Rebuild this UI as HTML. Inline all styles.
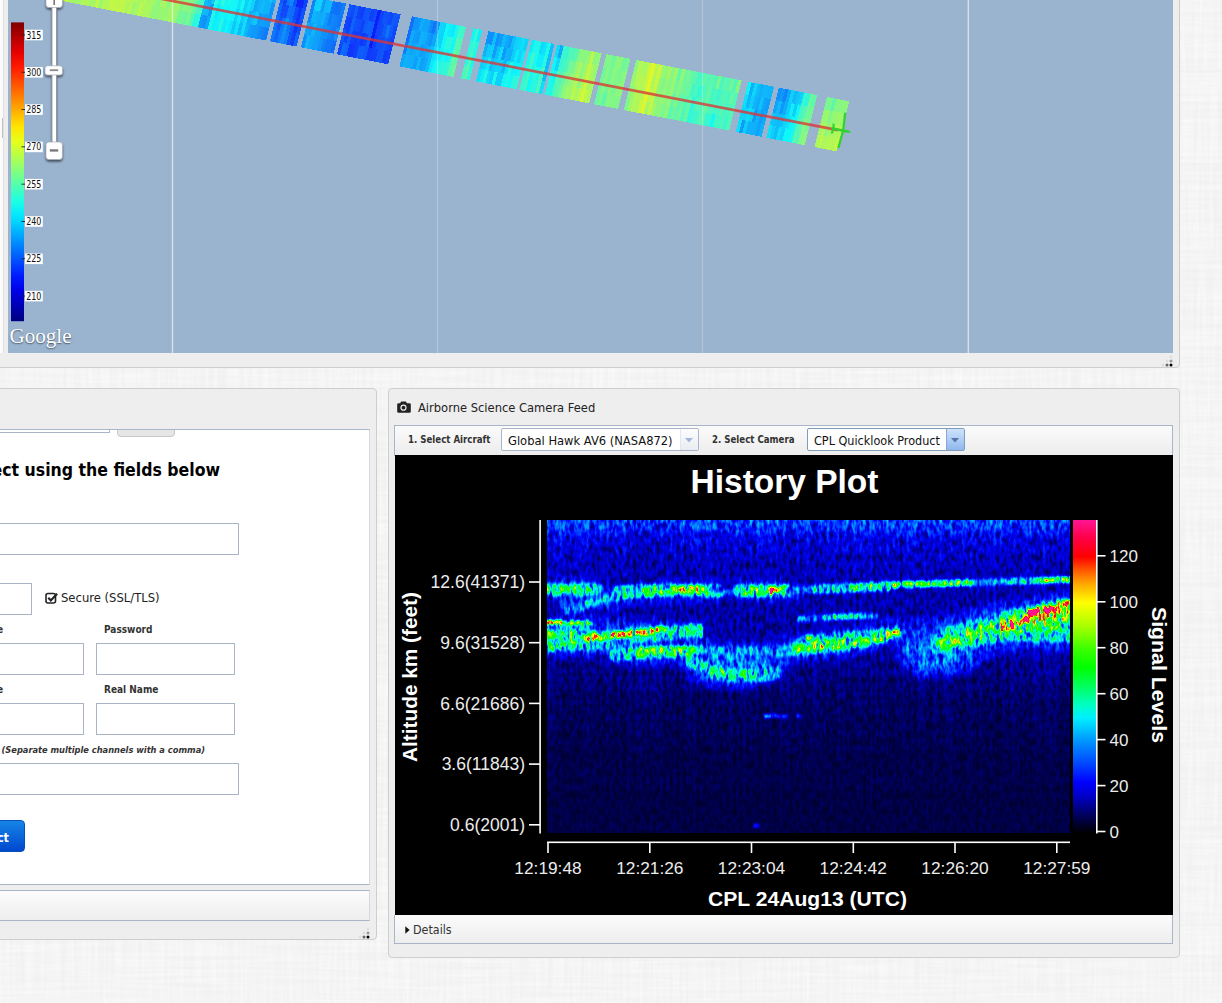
<!DOCTYPE html>
<html lang="en">
<head>
<meta charset="utf-8">
<title>Mission Tools Suite</title>
<style>
html,body{margin:0;padding:0;}
body{width:1222px;height:1003px;overflow:hidden;position:relative;background:#f1f1f1;font-family:"DejaVu Sans Condensed","DejaVu Sans","Liberation Sans",sans-serif;font-size:12.7px;color:#222;}
.abs{position:absolute;}
.bgtex{left:0;top:0;width:1222px;height:1003px;
 background-image:repeating-linear-gradient(0deg,rgba(0,0,0,0.008) 0 1px,transparent 1px 5px),repeating-linear-gradient(90deg,rgba(0,0,0,0.008) 0 1px,transparent 1px 5px);}
.panel{background:#eeeeee;border:1px solid #cecece;border-radius:4px;box-sizing:border-box;}
/* top map panel */
#mappanel{left:-20px;top:-20px;width:1200px;height:388px;}
#leftstrip{left:0;top:0;width:3px;height:353px;background:#fbfbfb;border-right:1px solid #e0e0e0;}
#map{left:8px;top:0;width:1165px;height:353px;background:#9ab3ce;overflow:hidden;}
.grip{width:12px;height:12px;}
/* left form panel */
#formpanel{left:-20px;top:388px;width:397px;height:552px;}
#formwhite{left:-5px;top:429px;width:375px;height:456px;background:#fff;border:1px solid #a9b5c9;border-right-color:#d3d9e3;box-sizing:border-box;overflow:hidden;}
.inp{background:#fff;border:1px solid #a9b4c6;box-sizing:border-box;}
.lbl{font-weight:bold;font-size:10px;color:#333;white-space:nowrap;}
#formbar{left:-5px;top:890px;width:375px;height:31px;border:1px solid #a9b5c9;border-right-color:#d3d9e3;box-sizing:border-box;background:linear-gradient(#fcfcfc,#eeeeee);}
/* right camera panel */
#campanel{left:388px;top:388px;width:792px;height:570px;}
#camtitle{left:418px;top:400px;font-size:12.8px;color:#222;white-space:nowrap;}
#toolbar{left:394px;top:425px;width:779px;height:31px;border:1px solid #a9b5c9;box-sizing:border-box;background:linear-gradient(#fbfbfb,#ececec);}
.tlbl{font-weight:bold;font-size:9.6px;color:#333;white-space:nowrap;}
.sel{box-sizing:border-box;height:23px;border:1px solid #a9b5c9;background:#fff;font-size:12.8px;color:#111;white-space:nowrap;border-radius:2px;}
#plot{left:395px;top:455px;width:778px;height:460px;background:#000;overflow:hidden;}
#details{left:394px;top:915px;width:779px;height:29px;border:1px solid #a9b5c9;border-top:none;box-sizing:border-box;background:linear-gradient(#fbfbfb,#eeeeee);}
</style>
</head>
<body>
<svg class="abs" style="left:0;top:0" width="1222" height="1003"><filter id="fab" filterUnits="userSpaceOnUse" x="0" y="0" width="1222" height="1003" color-interpolation-filters="sRGB"><feTurbulence type="fractalNoise" baseFrequency="0.012 0.3" numOctaves="2" seed="2" result="a"/><feTurbulence type="fractalNoise" baseFrequency="0.3 0.012" numOctaves="2" seed="5" result="b"/><feComposite in="a" in2="b" operator="arithmetic" k1="0" k2="0.500" k3="0.500" k4="0"/><feColorMatrix type="matrix" values="0 0 0 0 1  0 0 0 0 1  0 0 0 0 1  1.400 0 0 0 -0.450"/></filter><rect width="1222" height="1003" filter="url(#fab)"/></svg>

<!-- ============ TOP MAP PANEL ============ -->
<div class="abs panel" id="mappanel"></div>
<div class="abs" id="leftstrip"><div class="abs" style="left:2px;top:118px;width:1px;height:20px;background:#c4c4c4"></div></div>
<div class="abs" id="map">
<svg class="abs" style="left:0;top:0" width="1165" height="353" viewBox="8 0 1165 353">
<defs>
<linearGradient id="sw" gradientUnits="userSpaceOnUse" x1="-237.15" y1="0" x2="686.80" y2="0"><stop offset="0.0000" stop-color="#8c8c8c"/><stop offset="0.0750" stop-color="#8f8f8f"/><stop offset="0.1323" stop-color="#919191"/><stop offset="0.1874" stop-color="#999999"/><stop offset="0.2007" stop-color="#a1a1a1"/><stop offset="0.2150" stop-color="#949494"/><stop offset="0.2558" stop-color="#8f8f8f"/><stop offset="0.2778" stop-color="#808080"/><stop offset="0.2905" stop-color="#6b6b6b"/><stop offset="0.2922" stop-color="#454545"/><stop offset="0.2982" stop-color="#454545"/><stop offset="0.3004" stop-color="#5e5e5e"/><stop offset="0.3109" stop-color="#666666"/><stop offset="0.3252" stop-color="#595959"/><stop offset="0.3418" stop-color="#545454"/><stop offset="0.3517" stop-color="#4a4a4a"/><stop offset="0.3638" stop-color="#454545"/><stop offset="0.3705" stop-color="#383838"/><stop offset="0.3859" stop-color="#363636"/><stop offset="0.3947" stop-color="#2b2b2b"/><stop offset="0.3980" stop-color="#303030"/><stop offset="0.4046" stop-color="#454545"/><stop offset="0.4123" stop-color="#545454"/><stop offset="0.4168" stop-color="#474747"/><stop offset="0.4300" stop-color="#424242"/><stop offset="0.4388" stop-color="#3d3d3d"/><stop offset="0.4443" stop-color="#303030"/><stop offset="0.4686" stop-color="#2e2e2e"/><stop offset="0.4983" stop-color="#333333"/><stop offset="0.5127" stop-color="#404040"/><stop offset="0.5347" stop-color="#4a4a4a"/><stop offset="0.5491" stop-color="#5c5c5c"/><stop offset="0.5623" stop-color="#666666"/><stop offset="0.5711" stop-color="#707070"/><stop offset="0.5799" stop-color="#666666"/><stop offset="0.5888" stop-color="#696969"/><stop offset="0.5965" stop-color="#525252"/><stop offset="0.6174" stop-color="#545454"/><stop offset="0.6406" stop-color="#5c5c5c"/><stop offset="0.6439" stop-color="#666666"/><stop offset="0.6615" stop-color="#616161"/><stop offset="0.6692" stop-color="#545454"/><stop offset="0.6725" stop-color="#5c5c5c"/><stop offset="0.6836" stop-color="#6b6b6b"/><stop offset="0.6935" stop-color="#808080"/><stop offset="0.7034" stop-color="#919191"/><stop offset="0.7211" stop-color="#919191"/><stop offset="0.7266" stop-color="#808080"/><stop offset="0.7519" stop-color="#808080"/><stop offset="0.7596" stop-color="#858585"/><stop offset="0.7718" stop-color="#949494"/><stop offset="0.7806" stop-color="#a1a1a1"/><stop offset="0.7894" stop-color="#8f8f8f"/><stop offset="0.8049" stop-color="#808080"/><stop offset="0.8379" stop-color="#737373"/><stop offset="0.8809" stop-color="#707070"/><stop offset="0.8864" stop-color="#525252"/><stop offset="0.9041" stop-color="#4c4c4c"/><stop offset="0.9129" stop-color="#404040"/><stop offset="0.9184" stop-color="#454545"/><stop offset="0.9316" stop-color="#4f4f4f"/><stop offset="0.9427" stop-color="#666666"/><stop offset="0.9515" stop-color="#787878"/><stop offset="0.9614" stop-color="#878787"/><stop offset="0.9724" stop-color="#878787"/><stop offset="0.9868" stop-color="#8a8a8a"/><stop offset="1.0000" stop-color="#8c8c8c"/></linearGradient>
<linearGradient id="swv" x1="0" y1="0" x2="0" y2="1"><stop offset="0" stop-color="#000" stop-opacity="0.10"/><stop offset="0.5" stop-color="#000" stop-opacity="0"/><stop offset="1" stop-color="#fff" stop-opacity="0.08"/></linearGradient>
<filter id="jetf" filterUnits="userSpaceOnUse" x="0" y="0" width="900" height="170" color-interpolation-filters="sRGB">
<feTurbulence type="fractalNoise" baseFrequency="0.16 0.13" numOctaves="2" seed="3" result="t"/>
<feColorMatrix in="t" type="matrix" values="2 0 0 0 -0.5  2 0 0 0 -0.5  2 0 0 0 -0.5  0 0 0 0 1" result="n"/>
<feComposite in="SourceGraphic" in2="n" operator="arithmetic" k1="0.44" k2="0.78" k3="0" k4="0" result="m"/>
<feComponentTransfer in="m" result="c"><feFuncR type="table" tableValues="0.000 0.000 0.000 0.000 0.000 0.000 0.000 0.000 0.000 0.000 0.000 0.000 0.000 0.000 0.000 0.000 0.100 0.200 0.300 0.400 0.500 0.600 0.700 0.800 0.900 1.000 1.000 1.000 1.000 1.000 1.000 1.000 1.000 1.000 1.000 1.000 0.900 0.800 0.700 0.600 0.500"/><feFuncG type="table" tableValues="0.000 0.000 0.000 0.000 0.000 0.000 0.100 0.200 0.300 0.400 0.500 0.600 0.700 0.800 0.900 1.000 1.000 1.000 1.000 1.000 1.000 1.000 1.000 1.000 1.000 1.000 0.900 0.800 0.700 0.600 0.500 0.400 0.300 0.200 0.100 0.000 0.000 0.000 0.000 0.000 0.000"/><feFuncB type="table" tableValues="0.500 0.600 0.700 0.800 0.900 1.000 1.000 1.000 1.000 1.000 1.000 1.000 1.000 1.000 1.000 1.000 0.900 0.800 0.700 0.600 0.500 0.400 0.300 0.200 0.100 0.000 0.000 0.000 0.000 0.000 0.000 0.000 0.000 0.000 0.000 0.000 0.000 0.000 0.000 0.000 0.000"/></feComponentTransfer>
<feComposite in="c" in2="SourceGraphic" operator="in"/>
</filter>
<linearGradient id="jetbar" x1="0" y1="0" x2="0" y2="1"><stop offset="0.000" stop-color="rgb(128,0,0)"/><stop offset="0.050" stop-color="rgb(179,0,0)"/><stop offset="0.100" stop-color="rgb(229,0,0)"/><stop offset="0.150" stop-color="rgb(255,26,0)"/><stop offset="0.200" stop-color="rgb(255,76,0)"/><stop offset="0.250" stop-color="rgb(255,128,0)"/><stop offset="0.300" stop-color="rgb(255,179,0)"/><stop offset="0.350" stop-color="rgb(255,229,0)"/><stop offset="0.400" stop-color="rgb(229,255,26)"/><stop offset="0.450" stop-color="rgb(179,255,76)"/><stop offset="0.500" stop-color="rgb(128,255,128)"/><stop offset="0.550" stop-color="rgb(76,255,179)"/><stop offset="0.600" stop-color="rgb(26,255,229)"/><stop offset="0.650" stop-color="rgb(0,229,255)"/><stop offset="0.700" stop-color="rgb(0,179,255)"/><stop offset="0.750" stop-color="rgb(0,128,255)"/><stop offset="0.800" stop-color="rgb(0,76,255)"/><stop offset="0.850" stop-color="rgb(0,26,255)"/><stop offset="0.900" stop-color="rgb(0,0,229)"/><stop offset="0.950" stop-color="rgb(0,0,179)"/><stop offset="1.000" stop-color="rgb(0,0,128)"/></linearGradient>
<filter id="sh" x="-30%" y="-30%" width="160%" height="180%"><feGaussianBlur in="SourceAlpha" stdDeviation="1.2"/><feOffset dy="1.5"/><feComponentTransfer><feFuncA type="linear" slope="0.55"/></feComponentTransfer><feMerge><feMergeNode/><feMergeNode in="SourceGraphic"/></feMerge></filter>
</defs>
<g transform="translate(172.80 1.00) rotate(10.990) skewX(-3)" shape-rendering="crispEdges"><rect x="-186.2" y="-30.5" width="3.54" height="13.07" fill="#a4f766"/><rect x="-186.2" y="-17.7" width="3.54" height="13.07" fill="#a1f768"/><rect x="-186.2" y="-4.9" width="3.54" height="13.07" fill="#8ff77a"/><rect x="-186.2" y="8.0" width="3.54" height="13.07" fill="#82f788"/><rect x="-182.9" y="-30.5" width="3.54" height="13.07" fill="#b1f759"/><rect x="-182.9" y="-17.7" width="3.54" height="13.07" fill="#aef75b"/><rect x="-182.9" y="-4.9" width="3.54" height="13.07" fill="#96f774"/><rect x="-182.9" y="8.0" width="3.54" height="13.07" fill="#8ef77b"/><rect x="-179.6" y="-30.5" width="3.54" height="13.07" fill="#b9f751"/><rect x="-179.6" y="-17.7" width="3.54" height="13.07" fill="#baf750"/><rect x="-179.6" y="-4.9" width="3.54" height="13.07" fill="#aef75b"/><rect x="-179.6" y="8.0" width="3.54" height="13.07" fill="#9ff76a"/><rect x="-176.3" y="-30.5" width="3.54" height="13.07" fill="#bff74b"/><rect x="-176.3" y="-17.7" width="3.54" height="13.07" fill="#a2f767"/><rect x="-176.3" y="-4.9" width="3.54" height="13.07" fill="#98f772"/><rect x="-176.3" y="8.0" width="3.54" height="13.07" fill="#8ef77c"/><rect x="-173.1" y="-30.5" width="3.54" height="13.07" fill="#b1f759"/><rect x="-173.1" y="-17.7" width="3.54" height="13.07" fill="#a6f764"/><rect x="-173.1" y="-4.9" width="3.54" height="13.07" fill="#a1f769"/><rect x="-173.1" y="8.0" width="3.54" height="13.07" fill="#9cf76d"/><rect x="-169.8" y="-30.5" width="3.54" height="13.07" fill="#bef74b"/><rect x="-169.8" y="-17.7" width="3.54" height="13.07" fill="#b0f759"/><rect x="-169.8" y="-4.9" width="3.54" height="13.07" fill="#9bf76f"/><rect x="-169.8" y="8.0" width="3.54" height="13.07" fill="#a6f764"/><rect x="-166.5" y="-30.5" width="3.54" height="13.07" fill="#9ff76a"/><rect x="-166.5" y="-17.7" width="3.54" height="13.07" fill="#8ff77b"/><rect x="-166.5" y="-4.9" width="3.54" height="13.07" fill="#93f777"/><rect x="-166.5" y="8.0" width="3.54" height="13.07" fill="#86f784"/><rect x="-163.2" y="-30.5" width="3.54" height="13.07" fill="#caf73f"/><rect x="-163.2" y="-17.7" width="3.54" height="13.07" fill="#aaf75f"/><rect x="-163.2" y="-4.9" width="3.54" height="13.07" fill="#aaf760"/><rect x="-163.2" y="8.0" width="3.54" height="13.07" fill="#93f777"/><rect x="-159.9" y="-30.5" width="3.54" height="13.07" fill="#b2f758"/><rect x="-159.9" y="-17.7" width="3.54" height="13.07" fill="#a5f764"/><rect x="-159.9" y="-4.9" width="3.54" height="13.07" fill="#a2f768"/><rect x="-159.9" y="8.0" width="3.54" height="13.07" fill="#98f771"/><rect x="-156.6" y="-30.5" width="3.54" height="13.07" fill="#aaf75f"/><rect x="-156.6" y="-17.7" width="3.54" height="13.07" fill="#99f771"/><rect x="-156.6" y="-4.9" width="3.54" height="13.07" fill="#a6f764"/><rect x="-156.6" y="8.0" width="3.54" height="13.07" fill="#8df77d"/><rect x="-153.3" y="-30.5" width="3.54" height="13.07" fill="#b8f752"/><rect x="-153.3" y="-17.7" width="3.54" height="13.07" fill="#b8f752"/><rect x="-153.3" y="-4.9" width="3.54" height="13.07" fill="#a5f764"/><rect x="-153.3" y="8.0" width="3.54" height="13.07" fill="#aaf760"/><rect x="-150.0" y="-30.5" width="3.54" height="13.07" fill="#b9f750"/><rect x="-150.0" y="-17.7" width="3.54" height="13.07" fill="#adf75c"/><rect x="-150.0" y="-4.9" width="3.54" height="13.07" fill="#a3f767"/><rect x="-150.0" y="8.0" width="3.54" height="13.07" fill="#95f775"/><rect x="-146.7" y="-30.5" width="3.54" height="13.07" fill="#bdf74d"/><rect x="-146.7" y="-17.7" width="3.54" height="13.07" fill="#bef74b"/><rect x="-146.7" y="-4.9" width="3.54" height="13.07" fill="#a8f761"/><rect x="-146.7" y="8.0" width="3.54" height="13.07" fill="#a8f761"/><rect x="-143.4" y="-30.5" width="3.54" height="13.07" fill="#b9f750"/><rect x="-143.4" y="-17.7" width="3.54" height="13.07" fill="#b1f758"/><rect x="-143.4" y="-4.9" width="3.54" height="13.07" fill="#aaf75f"/><rect x="-143.4" y="8.0" width="3.54" height="13.07" fill="#9df76c"/><rect x="-140.2" y="-30.5" width="3.54" height="13.07" fill="#a5f765"/><rect x="-140.2" y="-17.7" width="3.54" height="13.07" fill="#a5f765"/><rect x="-140.2" y="-4.9" width="3.54" height="13.07" fill="#a5f765"/><rect x="-140.2" y="8.0" width="3.54" height="13.07" fill="#9af770"/><rect x="-136.9" y="-30.5" width="3.54" height="13.07" fill="#c3f746"/><rect x="-136.9" y="-17.7" width="3.54" height="13.07" fill="#bbf74e"/><rect x="-136.9" y="-4.9" width="3.54" height="13.07" fill="#b0f759"/><rect x="-136.9" y="8.0" width="3.54" height="13.07" fill="#aef75c"/><rect x="-133.6" y="-30.5" width="3.54" height="13.07" fill="#c3f747"/><rect x="-133.6" y="-17.7" width="3.54" height="13.07" fill="#b9f751"/><rect x="-133.6" y="-4.9" width="3.54" height="13.07" fill="#c5f744"/><rect x="-133.6" y="8.0" width="3.54" height="13.07" fill="#b1f758"/><rect x="-130.3" y="-30.5" width="3.54" height="13.07" fill="#c4f746"/><rect x="-130.3" y="-17.7" width="3.54" height="13.07" fill="#aef75c"/><rect x="-130.3" y="-4.9" width="3.54" height="13.07" fill="#c1f749"/><rect x="-130.3" y="8.0" width="3.54" height="13.07" fill="#b5f755"/><rect x="-127.0" y="-30.5" width="3.54" height="13.07" fill="#bbf74f"/><rect x="-127.0" y="-17.7" width="3.54" height="13.07" fill="#aff75a"/><rect x="-127.0" y="-4.9" width="3.54" height="13.07" fill="#a1f769"/><rect x="-127.0" y="8.0" width="3.54" height="13.07" fill="#9ff76a"/><rect x="-123.7" y="-30.5" width="3.54" height="13.07" fill="#c0f74a"/><rect x="-123.7" y="-17.7" width="3.54" height="13.07" fill="#b6f754"/><rect x="-123.7" y="-4.9" width="3.54" height="13.07" fill="#aaf760"/><rect x="-123.7" y="8.0" width="3.54" height="13.07" fill="#acf75d"/><rect x="-120.4" y="-30.5" width="3.54" height="13.07" fill="#b2f757"/><rect x="-120.4" y="-17.7" width="3.54" height="13.07" fill="#aef75c"/><rect x="-120.4" y="-4.9" width="3.54" height="13.07" fill="#9cf76d"/><rect x="-120.4" y="8.0" width="3.54" height="13.07" fill="#8af780"/><rect x="-117.1" y="-30.5" width="3.54" height="13.07" fill="#adf75c"/><rect x="-117.1" y="-17.7" width="3.54" height="13.07" fill="#a8f761"/><rect x="-117.1" y="-4.9" width="3.54" height="13.07" fill="#a9f761"/><rect x="-117.1" y="8.0" width="3.54" height="13.07" fill="#8ff77b"/><rect x="-113.8" y="-30.5" width="3.54" height="13.07" fill="#baf74f"/><rect x="-113.8" y="-17.7" width="3.54" height="13.07" fill="#adf75c"/><rect x="-113.8" y="-4.9" width="3.54" height="13.07" fill="#96f774"/><rect x="-113.8" y="8.0" width="3.54" height="13.07" fill="#a6f763"/><rect x="-110.5" y="-30.5" width="3.54" height="13.07" fill="#d6f734"/><rect x="-110.5" y="-17.7" width="3.54" height="13.07" fill="#c0f749"/><rect x="-110.5" y="-4.9" width="3.54" height="13.07" fill="#bdf74c"/><rect x="-110.5" y="8.0" width="3.54" height="13.07" fill="#bbf74f"/><rect x="-107.2" y="-30.5" width="3.54" height="13.07" fill="#d6f734"/><rect x="-107.2" y="-17.7" width="3.54" height="13.07" fill="#cbf73e"/><rect x="-107.2" y="-4.9" width="3.54" height="13.07" fill="#cff73b"/><rect x="-107.2" y="8.0" width="3.54" height="13.07" fill="#bbf74e"/><rect x="-104.0" y="-30.5" width="3.54" height="13.07" fill="#c7f743"/><rect x="-104.0" y="-17.7" width="3.54" height="13.07" fill="#c1f748"/><rect x="-104.0" y="-4.9" width="3.54" height="13.07" fill="#c3f746"/><rect x="-104.0" y="8.0" width="3.54" height="13.07" fill="#c1f748"/><rect x="-100.7" y="-30.5" width="3.54" height="13.07" fill="#c3f747"/><rect x="-100.7" y="-17.7" width="3.54" height="13.07" fill="#acf75d"/><rect x="-100.7" y="-4.9" width="3.54" height="13.07" fill="#adf75c"/><rect x="-100.7" y="8.0" width="3.54" height="13.07" fill="#a7f763"/><rect x="-97.4" y="-30.5" width="3.54" height="13.07" fill="#baf750"/><rect x="-97.4" y="-17.7" width="3.54" height="13.07" fill="#acf75d"/><rect x="-97.4" y="-4.9" width="3.54" height="13.07" fill="#adf75c"/><rect x="-97.4" y="8.0" width="3.54" height="13.07" fill="#a1f769"/><rect x="-94.1" y="-30.5" width="3.54" height="13.07" fill="#baf750"/><rect x="-94.1" y="-17.7" width="3.54" height="13.07" fill="#b5f755"/><rect x="-94.1" y="-4.9" width="3.54" height="13.07" fill="#b1f759"/><rect x="-94.1" y="8.0" width="3.54" height="13.07" fill="#a0f76a"/><rect x="-90.8" y="-30.5" width="3.54" height="13.07" fill="#b1f759"/><rect x="-90.8" y="-17.7" width="3.54" height="13.07" fill="#c0f74a"/><rect x="-90.8" y="-4.9" width="3.54" height="13.07" fill="#b7f752"/><rect x="-90.8" y="8.0" width="3.54" height="13.07" fill="#a4f765"/><rect x="-87.5" y="-30.5" width="3.54" height="13.07" fill="#b0f759"/><rect x="-87.5" y="-17.7" width="3.54" height="13.07" fill="#b4f756"/><rect x="-87.5" y="-4.9" width="3.54" height="13.07" fill="#adf75d"/><rect x="-87.5" y="8.0" width="3.54" height="13.07" fill="#b4f755"/><rect x="-84.2" y="-30.5" width="3.54" height="13.07" fill="#bcf74d"/><rect x="-84.2" y="-17.7" width="3.54" height="13.07" fill="#a9f761"/><rect x="-84.2" y="-4.9" width="3.54" height="13.07" fill="#bef74b"/><rect x="-84.2" y="8.0" width="3.54" height="13.07" fill="#aef75b"/><rect x="-80.9" y="-30.5" width="3.54" height="13.07" fill="#b1f758"/><rect x="-80.9" y="-17.7" width="3.54" height="13.07" fill="#9df76c"/><rect x="-80.9" y="-4.9" width="3.54" height="13.07" fill="#bcf74e"/><rect x="-80.9" y="8.0" width="3.54" height="13.07" fill="#a3f766"/><rect x="-77.6" y="-30.5" width="3.54" height="13.07" fill="#c6f743"/><rect x="-77.6" y="-17.7" width="3.54" height="13.07" fill="#b1f759"/><rect x="-77.6" y="-4.9" width="3.54" height="13.07" fill="#b8f751"/><rect x="-77.6" y="8.0" width="3.54" height="13.07" fill="#a7f763"/><rect x="-74.3" y="-30.5" width="3.54" height="13.07" fill="#b9f750"/><rect x="-74.3" y="-17.7" width="3.54" height="13.07" fill="#bbf74e"/><rect x="-74.3" y="-4.9" width="3.54" height="13.07" fill="#c4f746"/><rect x="-74.3" y="8.0" width="3.54" height="13.07" fill="#c0f74a"/><rect x="-71.1" y="-30.5" width="3.54" height="13.07" fill="#acf75d"/><rect x="-71.1" y="-17.7" width="3.54" height="13.07" fill="#b7f752"/><rect x="-71.1" y="-4.9" width="3.54" height="13.07" fill="#b0f75a"/><rect x="-71.1" y="8.0" width="3.54" height="13.07" fill="#9bf76e"/><rect x="-67.8" y="-30.5" width="3.54" height="13.07" fill="#b9f751"/><rect x="-67.8" y="-17.7" width="3.54" height="13.07" fill="#aef75c"/><rect x="-67.8" y="-4.9" width="3.54" height="13.07" fill="#abf75f"/><rect x="-67.8" y="8.0" width="3.54" height="13.07" fill="#b2f758"/><rect x="-64.5" y="-30.5" width="3.54" height="13.07" fill="#def72c"/><rect x="-64.5" y="-17.7" width="3.54" height="13.07" fill="#c7f743"/><rect x="-64.5" y="-4.9" width="3.54" height="13.07" fill="#bff74a"/><rect x="-64.5" y="8.0" width="3.54" height="13.07" fill="#b2f758"/><rect x="-61.2" y="-30.5" width="3.54" height="13.07" fill="#c1f749"/><rect x="-61.2" y="-17.7" width="3.54" height="13.07" fill="#b6f753"/><rect x="-61.2" y="-4.9" width="3.54" height="13.07" fill="#c2f748"/><rect x="-61.2" y="8.0" width="3.54" height="13.07" fill="#c0f74a"/><rect x="-57.9" y="-30.5" width="3.54" height="13.07" fill="#e3f727"/><rect x="-57.9" y="-17.7" width="3.54" height="13.07" fill="#d4f736"/><rect x="-57.9" y="-4.9" width="3.54" height="13.07" fill="#c6f744"/><rect x="-57.9" y="8.0" width="3.54" height="13.07" fill="#c4f745"/><rect x="-54.6" y="-30.5" width="3.54" height="13.07" fill="#c9f740"/><rect x="-54.6" y="-17.7" width="3.54" height="13.07" fill="#bef74c"/><rect x="-54.6" y="-4.9" width="3.54" height="13.07" fill="#b8f751"/><rect x="-54.6" y="8.0" width="3.54" height="13.07" fill="#bcf74e"/><rect x="-51.3" y="-30.5" width="3.54" height="13.07" fill="#d0f739"/><rect x="-51.3" y="-17.7" width="3.54" height="13.07" fill="#d7f732"/><rect x="-51.3" y="-4.9" width="3.54" height="13.07" fill="#c7f743"/><rect x="-51.3" y="8.0" width="3.54" height="13.07" fill="#c3f747"/><rect x="-48.0" y="-30.5" width="3.54" height="13.07" fill="#d2f738"/><rect x="-48.0" y="-17.7" width="3.54" height="13.07" fill="#c2f747"/><rect x="-48.0" y="-4.9" width="3.54" height="13.07" fill="#cff73a"/><rect x="-48.0" y="8.0" width="3.54" height="13.07" fill="#bdf74c"/><rect x="-44.7" y="-30.5" width="3.54" height="13.07" fill="#d4f735"/><rect x="-44.7" y="-17.7" width="3.54" height="13.07" fill="#d2f738"/><rect x="-44.7" y="-4.9" width="3.54" height="13.07" fill="#c9f740"/><rect x="-44.7" y="8.0" width="3.54" height="13.07" fill="#adf75d"/><rect x="-41.4" y="-30.5" width="3.54" height="13.07" fill="#c0f74a"/><rect x="-41.4" y="-17.7" width="3.54" height="13.07" fill="#b8f752"/><rect x="-41.4" y="-4.9" width="3.54" height="13.07" fill="#b3f756"/><rect x="-41.4" y="8.0" width="3.54" height="13.07" fill="#b5f755"/><rect x="-38.2" y="-30.5" width="3.54" height="13.07" fill="#caf73f"/><rect x="-38.2" y="-17.7" width="3.54" height="13.07" fill="#aff75a"/><rect x="-38.2" y="-4.9" width="3.54" height="13.07" fill="#b0f759"/><rect x="-38.2" y="8.0" width="3.54" height="13.07" fill="#9cf76e"/><rect x="-34.9" y="-30.5" width="3.54" height="13.07" fill="#bcf74d"/><rect x="-34.9" y="-17.7" width="3.54" height="13.07" fill="#abf75f"/><rect x="-34.9" y="-4.9" width="3.54" height="13.07" fill="#abf75e"/><rect x="-34.9" y="8.0" width="3.54" height="13.07" fill="#a4f765"/><rect x="-31.6" y="-30.5" width="3.54" height="13.07" fill="#bcf74d"/><rect x="-31.6" y="-17.7" width="3.54" height="13.07" fill="#b5f755"/><rect x="-31.6" y="-4.9" width="3.54" height="13.07" fill="#aef75b"/><rect x="-31.6" y="8.0" width="3.54" height="13.07" fill="#baf750"/><rect x="-28.3" y="-30.5" width="3.54" height="13.07" fill="#c1f748"/><rect x="-28.3" y="-17.7" width="3.54" height="13.07" fill="#bcf74d"/><rect x="-28.3" y="-4.9" width="3.54" height="13.07" fill="#b5f755"/><rect x="-28.3" y="8.0" width="3.54" height="13.07" fill="#aef75b"/><rect x="-25.0" y="-30.5" width="3.54" height="13.07" fill="#b1f758"/><rect x="-25.0" y="-17.7" width="3.54" height="13.07" fill="#a3f766"/><rect x="-25.0" y="-4.9" width="3.54" height="13.07" fill="#a1f769"/><rect x="-25.0" y="8.0" width="3.54" height="13.07" fill="#abf75f"/><rect x="-21.7" y="-30.5" width="3.54" height="13.07" fill="#bbf74f"/><rect x="-21.7" y="-17.7" width="3.54" height="13.07" fill="#b2f758"/><rect x="-21.7" y="-4.9" width="3.54" height="13.07" fill="#adf75d"/><rect x="-21.7" y="8.0" width="3.54" height="13.07" fill="#a8f762"/><rect x="-18.4" y="-30.5" width="3.54" height="13.07" fill="#aff75b"/><rect x="-18.4" y="-17.7" width="3.54" height="13.07" fill="#a8f762"/><rect x="-18.4" y="-4.9" width="3.54" height="13.07" fill="#99f770"/><rect x="-18.4" y="8.0" width="3.54" height="13.07" fill="#92f778"/><rect x="-15.1" y="-30.5" width="3.54" height="13.07" fill="#a1f769"/><rect x="-15.1" y="-17.7" width="3.54" height="13.07" fill="#a8f761"/><rect x="-15.1" y="-4.9" width="3.54" height="13.07" fill="#89f781"/><rect x="-15.1" y="8.0" width="3.54" height="13.07" fill="#91f778"/><rect x="-11.8" y="-30.5" width="3.54" height="13.07" fill="#a7f763"/><rect x="-11.8" y="-17.7" width="3.54" height="13.07" fill="#a5f764"/><rect x="-11.8" y="-4.9" width="3.54" height="13.07" fill="#a6f764"/><rect x="-11.8" y="8.0" width="3.54" height="13.07" fill="#97f773"/><rect x="-8.5" y="-30.5" width="3.54" height="13.07" fill="#abf75f"/><rect x="-8.5" y="-17.7" width="3.54" height="13.07" fill="#a7f762"/><rect x="-8.5" y="-4.9" width="3.54" height="13.07" fill="#a8f762"/><rect x="-8.5" y="8.0" width="3.54" height="13.07" fill="#97f772"/><rect x="-5.3" y="-30.5" width="3.54" height="13.07" fill="#9bf76f"/><rect x="-5.3" y="-17.7" width="3.54" height="13.07" fill="#95f775"/><rect x="-5.3" y="-4.9" width="3.54" height="13.07" fill="#8cf77e"/><rect x="-5.3" y="8.0" width="3.54" height="13.07" fill="#97f773"/><rect x="-2.0" y="-30.5" width="3.54" height="13.07" fill="#b0f759"/><rect x="-2.0" y="-17.7" width="3.54" height="13.07" fill="#b5f754"/><rect x="-2.0" y="-4.9" width="3.54" height="13.07" fill="#9ff76b"/><rect x="-2.0" y="8.0" width="3.54" height="13.07" fill="#a2f767"/><rect x="1.3" y="-30.5" width="3.54" height="13.07" fill="#a5f764"/><rect x="1.3" y="-17.7" width="3.54" height="13.07" fill="#9ef76b"/><rect x="1.3" y="-4.9" width="3.54" height="13.07" fill="#9cf76e"/><rect x="1.3" y="8.0" width="3.54" height="13.07" fill="#a2f767"/><rect x="4.6" y="-30.5" width="3.54" height="13.07" fill="#a7f762"/><rect x="4.6" y="-17.7" width="3.54" height="13.07" fill="#b1f758"/><rect x="4.6" y="-4.9" width="3.54" height="13.07" fill="#9ff76a"/><rect x="4.6" y="8.0" width="3.54" height="13.07" fill="#98f771"/><rect x="7.9" y="-30.5" width="3.54" height="13.07" fill="#96f774"/><rect x="7.9" y="-17.7" width="3.54" height="13.07" fill="#83f786"/><rect x="7.9" y="-4.9" width="3.54" height="13.07" fill="#82f787"/><rect x="7.9" y="8.0" width="3.54" height="13.07" fill="#74f795"/><rect x="11.2" y="-30.5" width="3.54" height="13.07" fill="#adf75d"/><rect x="11.2" y="-17.7" width="3.54" height="13.07" fill="#aaf75f"/><rect x="11.2" y="-4.9" width="3.54" height="13.07" fill="#8cf77d"/><rect x="11.2" y="8.0" width="3.54" height="13.07" fill="#77f793"/><rect x="14.5" y="-30.5" width="3.54" height="13.07" fill="#87f782"/><rect x="14.5" y="-17.7" width="3.54" height="13.07" fill="#96f774"/><rect x="14.5" y="-4.9" width="3.54" height="13.07" fill="#84f785"/><rect x="14.5" y="8.0" width="3.54" height="13.07" fill="#6bf79f"/><rect x="17.8" y="-30.5" width="3.54" height="13.07" fill="#9bf76f"/><rect x="17.8" y="-17.7" width="3.54" height="13.07" fill="#83f786"/><rect x="17.8" y="-4.9" width="3.54" height="13.07" fill="#84f785"/><rect x="17.8" y="8.0" width="3.54" height="13.07" fill="#7ef78c"/><rect x="21.1" y="-30.5" width="3.54" height="13.07" fill="#81f788"/><rect x="21.1" y="-17.7" width="3.54" height="13.07" fill="#70f799"/><rect x="21.1" y="-4.9" width="3.54" height="13.07" fill="#6bf79e"/><rect x="21.1" y="8.0" width="3.54" height="13.07" fill="#56f7b3"/><rect x="24.4" y="-30.5" width="3.54" height="13.07" fill="#6ef79b"/><rect x="24.4" y="-17.7" width="3.54" height="13.07" fill="#55f7b5"/><rect x="24.4" y="-4.9" width="3.54" height="13.07" fill="#4af7bf"/><rect x="24.4" y="8.0" width="3.54" height="13.07" fill="#27f7e3"/><rect x="27.6" y="-30.5" width="3.54" height="13.07" fill="#5df7ac"/><rect x="27.6" y="-17.7" width="3.54" height="13.07" fill="#39f7d1"/><rect x="27.6" y="-4.9" width="3.54" height="13.07" fill="#4af7c0"/><rect x="27.6" y="8.0" width="3.54" height="13.07" fill="#2df7dd"/><rect x="30.9" y="-30.5" width="3.54" height="13.07" fill="#0fc1fa"/><rect x="30.9" y="-17.7" width="3.54" height="13.07" fill="#0fbafa"/><rect x="30.9" y="-4.9" width="3.54" height="13.07" fill="#0fbafa"/><rect x="30.9" y="8.0" width="3.54" height="13.07" fill="#0f9bfa"/><rect x="34.2" y="-30.5" width="3.54" height="13.07" fill="#0fb9fa"/><rect x="34.2" y="-17.7" width="3.54" height="13.07" fill="#0fabfa"/><rect x="34.2" y="-4.9" width="3.54" height="13.07" fill="#0fb4fa"/><rect x="34.2" y="8.0" width="3.54" height="13.07" fill="#0f93fa"/><rect x="37.5" y="-30.5" width="3.54" height="13.07" fill="#0fcffa"/><rect x="37.5" y="-17.7" width="3.54" height="13.07" fill="#0fc7fa"/><rect x="37.5" y="-4.9" width="3.54" height="13.07" fill="#0f98fa"/><rect x="37.5" y="8.0" width="3.54" height="13.07" fill="#0fa8fa"/><rect x="40.8" y="-30.5" width="3.54" height="13.07" fill="#4ff7ba"/><rect x="40.8" y="-17.7" width="3.54" height="13.07" fill="#33f7d7"/><rect x="40.8" y="-4.9" width="3.54" height="13.07" fill="#23f7e7"/><rect x="40.8" y="8.0" width="3.54" height="13.07" fill="#1bf7ef"/><rect x="44.1" y="-30.5" width="3.54" height="13.07" fill="#15f7f5"/><rect x="44.1" y="-17.7" width="3.54" height="13.07" fill="#0ff2fa"/><rect x="44.1" y="-4.9" width="3.54" height="13.07" fill="#0fe7fa"/><rect x="44.1" y="8.0" width="3.54" height="13.07" fill="#0fecfa"/><rect x="47.4" y="-30.5" width="3.54" height="13.07" fill="#1ff7ea"/><rect x="47.4" y="-17.7" width="3.54" height="13.07" fill="#32f7d8"/><rect x="47.4" y="-4.9" width="3.54" height="13.07" fill="#0ff5fa"/><rect x="47.4" y="8.0" width="3.54" height="13.07" fill="#0ff1fa"/><rect x="50.7" y="-30.5" width="3.54" height="13.07" fill="#2af7e0"/><rect x="50.7" y="-17.7" width="3.54" height="13.07" fill="#16f7f3"/><rect x="50.7" y="-4.9" width="3.54" height="13.07" fill="#14f7f6"/><rect x="50.7" y="8.0" width="3.54" height="13.07" fill="#25f7e4"/><rect x="54.0" y="-30.5" width="3.54" height="13.07" fill="#19f7f1"/><rect x="54.0" y="-17.7" width="3.54" height="13.07" fill="#1cf7ed"/><rect x="54.0" y="-4.9" width="3.54" height="13.07" fill="#0ff4fa"/><rect x="54.0" y="8.0" width="3.54" height="13.07" fill="#0fe9fa"/><rect x="57.3" y="-30.5" width="3.54" height="13.07" fill="#10f7fa"/><rect x="57.3" y="-17.7" width="3.54" height="13.07" fill="#12f7f8"/><rect x="57.3" y="-4.9" width="3.54" height="13.07" fill="#12f7f8"/><rect x="57.3" y="8.0" width="3.54" height="13.07" fill="#0ff3fa"/><rect x="60.6" y="-30.5" width="3.54" height="13.07" fill="#29f7e1"/><rect x="60.6" y="-17.7" width="3.54" height="13.07" fill="#15f7f5"/><rect x="60.6" y="-4.9" width="3.54" height="13.07" fill="#0ff5fa"/><rect x="60.6" y="8.0" width="3.54" height="13.07" fill="#0fe6fa"/><rect x="63.8" y="-30.5" width="3.54" height="13.07" fill="#13f7f6"/><rect x="63.8" y="-17.7" width="3.54" height="13.07" fill="#0fe4fa"/><rect x="63.8" y="-4.9" width="3.54" height="13.07" fill="#0fd3fa"/><rect x="63.8" y="8.0" width="3.54" height="13.07" fill="#0fc7fa"/><rect x="67.1" y="-30.5" width="3.54" height="13.07" fill="#25f7e5"/><rect x="67.1" y="-17.7" width="3.54" height="13.07" fill="#16f7f4"/><rect x="67.1" y="-4.9" width="3.54" height="13.07" fill="#0ff1fa"/><rect x="67.1" y="8.0" width="3.54" height="13.07" fill="#0fe5fa"/><rect x="70.4" y="-30.5" width="3.54" height="13.07" fill="#0feffa"/><rect x="70.4" y="-17.7" width="3.54" height="13.07" fill="#0fcffa"/><rect x="70.4" y="-4.9" width="3.54" height="13.07" fill="#0fcefa"/><rect x="70.4" y="8.0" width="3.54" height="13.07" fill="#0fbcfa"/><rect x="73.7" y="-30.5" width="3.54" height="13.07" fill="#0fe8fa"/><rect x="73.7" y="-17.7" width="3.54" height="13.07" fill="#0fe2fa"/><rect x="73.7" y="-4.9" width="3.54" height="13.07" fill="#0fddfa"/><rect x="73.7" y="8.0" width="3.54" height="13.07" fill="#0fddfa"/><rect x="77.0" y="-30.5" width="3.54" height="13.07" fill="#0fc7fa"/><rect x="77.0" y="-17.7" width="3.54" height="13.07" fill="#0fd0fa"/><rect x="77.0" y="-4.9" width="3.54" height="13.07" fill="#0faefa"/><rect x="77.0" y="8.0" width="3.54" height="13.07" fill="#0fb5fa"/><rect x="80.3" y="-30.5" width="3.54" height="13.07" fill="#0fc7fa"/><rect x="80.3" y="-17.7" width="3.54" height="13.07" fill="#0fa7fa"/><rect x="80.3" y="-4.9" width="3.54" height="13.07" fill="#0fbafa"/><rect x="80.3" y="8.0" width="3.54" height="13.07" fill="#0fa0fa"/><rect x="83.6" y="-30.5" width="3.54" height="13.07" fill="#0fcffa"/><rect x="83.6" y="-17.7" width="3.54" height="13.07" fill="#0fb3fa"/><rect x="83.6" y="-4.9" width="3.54" height="13.07" fill="#0fc9fa"/><rect x="83.6" y="8.0" width="3.54" height="13.07" fill="#0f99fa"/><rect x="86.9" y="-30.5" width="3.54" height="13.07" fill="#0fb5fa"/><rect x="86.9" y="-17.7" width="3.54" height="13.07" fill="#0fbbfa"/><rect x="86.9" y="-4.9" width="3.54" height="13.07" fill="#0f9cfa"/><rect x="86.9" y="8.0" width="3.54" height="13.07" fill="#0f97fa"/><rect x="90.2" y="-30.5" width="3.54" height="13.07" fill="#0fb2fa"/><rect x="90.2" y="-17.7" width="3.54" height="13.07" fill="#0fb3fa"/><rect x="90.2" y="-4.9" width="3.54" height="13.07" fill="#0fa0fa"/><rect x="90.2" y="8.0" width="3.54" height="13.07" fill="#0f8bfa"/><rect x="93.5" y="-30.5" width="3.54" height="13.07" fill="#0fc5fa"/><rect x="93.5" y="-17.7" width="3.54" height="13.07" fill="#0fb2fa"/><rect x="93.5" y="-4.9" width="3.54" height="13.07" fill="#0f9bfa"/><rect x="93.5" y="8.0" width="3.54" height="13.07" fill="#0f83fa"/><rect x="96.7" y="-30.5" width="3.54" height="13.07" fill="#0fb0fa"/><rect x="96.7" y="-17.7" width="3.54" height="13.07" fill="#0f92fa"/><rect x="96.7" y="-4.9" width="3.54" height="13.07" fill="#0f9afa"/><rect x="96.7" y="8.0" width="3.54" height="13.07" fill="#0f7dfa"/><rect x="104.1" y="-30.5" width="3.62" height="13.07" fill="#0f5cfa"/><rect x="104.1" y="-17.7" width="3.62" height="13.07" fill="#0f68fa"/><rect x="104.1" y="-4.9" width="3.62" height="13.07" fill="#0f6ffa"/><rect x="104.1" y="8.0" width="3.62" height="13.07" fill="#0f78fa"/><rect x="107.5" y="-30.5" width="3.62" height="13.07" fill="#0f41fa"/><rect x="107.5" y="-17.7" width="3.62" height="13.07" fill="#0f49fa"/><rect x="107.5" y="-4.9" width="3.62" height="13.07" fill="#0f55fa"/><rect x="107.5" y="8.0" width="3.62" height="13.07" fill="#0f65fa"/><rect x="110.9" y="-30.5" width="3.62" height="13.07" fill="#0f74fa"/><rect x="110.9" y="-17.7" width="3.62" height="13.07" fill="#0f4bfa"/><rect x="110.9" y="-4.9" width="3.62" height="13.07" fill="#0f78fa"/><rect x="110.9" y="8.0" width="3.62" height="13.07" fill="#0f7afa"/><rect x="114.2" y="-30.5" width="3.62" height="13.07" fill="#0f85fa"/><rect x="114.2" y="-17.7" width="3.62" height="13.07" fill="#0f6ffa"/><rect x="114.2" y="-4.9" width="3.62" height="13.07" fill="#0f91fa"/><rect x="114.2" y="8.0" width="3.62" height="13.07" fill="#0f8ffa"/><rect x="117.6" y="-30.5" width="3.62" height="13.07" fill="#0f56fa"/><rect x="117.6" y="-17.7" width="3.62" height="13.07" fill="#0f6bfa"/><rect x="117.6" y="-4.9" width="3.62" height="13.07" fill="#0f73fa"/><rect x="117.6" y="8.0" width="3.62" height="13.07" fill="#0f7dfa"/><rect x="121.0" y="-30.5" width="3.62" height="13.07" fill="#0f24fa"/><rect x="121.0" y="-17.7" width="3.62" height="13.07" fill="#0f48fa"/><rect x="121.0" y="-4.9" width="3.62" height="13.07" fill="#0f58fa"/><rect x="121.0" y="8.0" width="3.62" height="13.07" fill="#0f54fa"/><rect x="124.4" y="-30.5" width="3.62" height="13.07" fill="#0f26fa"/><rect x="124.4" y="-17.7" width="3.62" height="13.07" fill="#0f33fa"/><rect x="124.4" y="-4.9" width="3.62" height="13.07" fill="#0f34fa"/><rect x="124.4" y="8.0" width="3.62" height="13.07" fill="#0f3ffa"/><rect x="127.7" y="-30.5" width="3.62" height="13.07" fill="#0f43fa"/><rect x="127.7" y="-17.7" width="3.62" height="13.07" fill="#0f53fa"/><rect x="127.7" y="-4.9" width="3.62" height="13.07" fill="#0f4cfa"/><rect x="127.7" y="8.0" width="3.62" height="13.07" fill="#0f63fa"/><rect x="135.7" y="-30.5" width="3.56" height="13.07" fill="#0f84fa"/><rect x="135.7" y="-17.7" width="3.56" height="13.07" fill="#0f87fa"/><rect x="135.7" y="-4.9" width="3.56" height="13.07" fill="#0fa5fa"/><rect x="135.7" y="8.0" width="3.56" height="13.07" fill="#0f8dfa"/><rect x="139.0" y="-30.5" width="3.56" height="13.07" fill="#0fcefa"/><rect x="139.0" y="-17.7" width="3.56" height="13.07" fill="#0fb3fa"/><rect x="139.0" y="-4.9" width="3.56" height="13.07" fill="#0f9ffa"/><rect x="139.0" y="8.0" width="3.56" height="13.07" fill="#0fb8fa"/><rect x="142.3" y="-30.5" width="3.56" height="13.07" fill="#0fd1fa"/><rect x="142.3" y="-17.7" width="3.56" height="13.07" fill="#0faefa"/><rect x="142.3" y="-4.9" width="3.56" height="13.07" fill="#0fb6fa"/><rect x="142.3" y="8.0" width="3.56" height="13.07" fill="#0faafa"/><rect x="145.6" y="-30.5" width="3.56" height="13.07" fill="#0f9dfa"/><rect x="145.6" y="-17.7" width="3.56" height="13.07" fill="#0fa8fa"/><rect x="145.6" y="-4.9" width="3.56" height="13.07" fill="#0fa4fa"/><rect x="145.6" y="8.0" width="3.56" height="13.07" fill="#0fa2fa"/><rect x="148.9" y="-30.5" width="3.56" height="13.07" fill="#0fb7fa"/><rect x="148.9" y="-17.7" width="3.56" height="13.07" fill="#0fadfa"/><rect x="148.9" y="-4.9" width="3.56" height="13.07" fill="#0fa1fa"/><rect x="148.9" y="8.0" width="3.56" height="13.07" fill="#0f9ffa"/><rect x="152.2" y="-30.5" width="3.56" height="13.07" fill="#0fb8fa"/><rect x="152.2" y="-17.7" width="3.56" height="13.07" fill="#0f96fa"/><rect x="152.2" y="-4.9" width="3.56" height="13.07" fill="#0f92fa"/><rect x="152.2" y="8.0" width="3.56" height="13.07" fill="#0f93fa"/><rect x="155.6" y="-30.5" width="3.56" height="13.07" fill="#0f75fa"/><rect x="155.6" y="-17.7" width="3.56" height="13.07" fill="#0f7efa"/><rect x="155.6" y="-4.9" width="3.56" height="13.07" fill="#0f91fa"/><rect x="155.6" y="8.0" width="3.56" height="13.07" fill="#0f80fa"/><rect x="158.9" y="-30.5" width="3.56" height="13.07" fill="#0f71fa"/><rect x="158.9" y="-17.7" width="3.56" height="13.07" fill="#0f87fa"/><rect x="158.9" y="-4.9" width="3.56" height="13.07" fill="#0f84fa"/><rect x="158.9" y="8.0" width="3.56" height="13.07" fill="#0f76fa"/><rect x="162.2" y="-30.5" width="3.56" height="13.07" fill="#0f73fa"/><rect x="162.2" y="-17.7" width="3.56" height="13.07" fill="#0f80fa"/><rect x="162.2" y="-4.9" width="3.56" height="13.07" fill="#0f7bfa"/><rect x="162.2" y="8.0" width="3.56" height="13.07" fill="#0f76fa"/><rect x="165.5" y="-30.5" width="3.56" height="13.07" fill="#0f7dfa"/><rect x="165.5" y="-17.7" width="3.56" height="13.07" fill="#0f79fa"/><rect x="165.5" y="-4.9" width="3.56" height="13.07" fill="#0f93fa"/><rect x="165.5" y="8.0" width="3.56" height="13.07" fill="#0f6bfa"/><rect x="172.4" y="-30.5" width="3.50" height="13.07" fill="#0f56fa"/><rect x="172.4" y="-17.7" width="3.50" height="13.07" fill="#0f44fa"/><rect x="172.4" y="-4.9" width="3.50" height="13.07" fill="#0f58fa"/><rect x="172.4" y="8.0" width="3.50" height="13.07" fill="#0f47fa"/><rect x="175.6" y="-30.5" width="3.50" height="13.07" fill="#0f4afa"/><rect x="175.6" y="-17.7" width="3.50" height="13.07" fill="#0f3efa"/><rect x="175.6" y="-4.9" width="3.50" height="13.07" fill="#0f43fa"/><rect x="175.6" y="8.0" width="3.50" height="13.07" fill="#0f69fa"/><rect x="178.9" y="-30.5" width="3.50" height="13.07" fill="#0f5dfa"/><rect x="178.9" y="-17.7" width="3.50" height="13.07" fill="#0f61fa"/><rect x="178.9" y="-4.9" width="3.50" height="13.07" fill="#0f5cfa"/><rect x="178.9" y="8.0" width="3.50" height="13.07" fill="#0f62fa"/><rect x="182.1" y="-30.5" width="3.50" height="13.07" fill="#0f42fa"/><rect x="182.1" y="-17.7" width="3.50" height="13.07" fill="#0f51fa"/><rect x="182.1" y="-4.9" width="3.50" height="13.07" fill="#0f41fa"/><rect x="182.1" y="8.0" width="3.50" height="13.07" fill="#0f35fa"/><rect x="185.3" y="-30.5" width="3.50" height="13.07" fill="#0f3efa"/><rect x="185.3" y="-17.7" width="3.50" height="13.07" fill="#0f4cfa"/><rect x="185.3" y="-4.9" width="3.50" height="13.07" fill="#0f3cfa"/><rect x="185.3" y="8.0" width="3.50" height="13.07" fill="#0f38fa"/><rect x="188.6" y="-30.5" width="3.50" height="13.07" fill="#0f54fa"/><rect x="188.6" y="-17.7" width="3.50" height="13.07" fill="#0f41fa"/><rect x="188.6" y="-4.9" width="3.50" height="13.07" fill="#0f43fa"/><rect x="188.6" y="8.0" width="3.50" height="13.07" fill="#0f41fa"/><rect x="191.8" y="-30.5" width="3.50" height="13.07" fill="#0f55fa"/><rect x="191.8" y="-17.7" width="3.50" height="13.07" fill="#0f5bfa"/><rect x="191.8" y="-4.9" width="3.50" height="13.07" fill="#0f37fa"/><rect x="191.8" y="8.0" width="3.50" height="13.07" fill="#0f5afa"/><rect x="195.1" y="-30.5" width="3.50" height="13.07" fill="#0f41fa"/><rect x="195.1" y="-17.7" width="3.50" height="13.07" fill="#0f62fa"/><rect x="195.1" y="-4.9" width="3.50" height="13.07" fill="#0f43fa"/><rect x="195.1" y="8.0" width="3.50" height="13.07" fill="#0f5cfa"/><rect x="198.3" y="-30.5" width="3.50" height="13.07" fill="#0f4bfa"/><rect x="198.3" y="-17.7" width="3.50" height="13.07" fill="#0f5dfa"/><rect x="198.3" y="-4.9" width="3.50" height="13.07" fill="#0f60fa"/><rect x="198.3" y="8.0" width="3.50" height="13.07" fill="#0f56fa"/><rect x="201.6" y="-30.5" width="3.50" height="13.07" fill="#0f1ffa"/><rect x="201.6" y="-17.7" width="3.50" height="13.07" fill="#0f21fa"/><rect x="201.6" y="-4.9" width="3.50" height="13.07" fill="#0f16fa"/><rect x="201.6" y="8.0" width="3.50" height="13.07" fill="#0f39fa"/><rect x="204.8" y="-30.5" width="3.50" height="13.07" fill="#0f43fa"/><rect x="204.8" y="-17.7" width="3.50" height="13.07" fill="#0f44fa"/><rect x="204.8" y="-4.9" width="3.50" height="13.07" fill="#0f3efa"/><rect x="204.8" y="8.0" width="3.50" height="13.07" fill="#0f3efa"/><rect x="208.1" y="-30.5" width="3.50" height="13.07" fill="#0f53fa"/><rect x="208.1" y="-17.7" width="3.50" height="13.07" fill="#0f49fa"/><rect x="208.1" y="-4.9" width="3.50" height="13.07" fill="#0f4efa"/><rect x="208.1" y="8.0" width="3.50" height="13.07" fill="#0f3ffa"/><rect x="211.3" y="-30.5" width="3.50" height="13.07" fill="#0f50fa"/><rect x="211.3" y="-17.7" width="3.50" height="13.07" fill="#0f5bfa"/><rect x="211.3" y="-4.9" width="3.50" height="13.07" fill="#0f4efa"/><rect x="211.3" y="8.0" width="3.50" height="13.07" fill="#0f52fa"/><rect x="214.6" y="-30.5" width="3.50" height="13.07" fill="#0f47fa"/><rect x="214.6" y="-17.7" width="3.50" height="13.07" fill="#0f73fa"/><rect x="214.6" y="-4.9" width="3.50" height="13.07" fill="#0f55fa"/><rect x="214.6" y="8.0" width="3.50" height="13.07" fill="#0f55fa"/><rect x="217.8" y="-30.5" width="3.50" height="13.07" fill="#0f5bfa"/><rect x="217.8" y="-17.7" width="3.50" height="13.07" fill="#0f59fa"/><rect x="217.8" y="-4.9" width="3.50" height="13.07" fill="#0f4cfa"/><rect x="217.8" y="8.0" width="3.50" height="13.07" fill="#0f38fa"/><rect x="221.1" y="-30.5" width="3.50" height="13.07" fill="#0f55fa"/><rect x="221.1" y="-17.7" width="3.50" height="13.07" fill="#0f48fa"/><rect x="221.1" y="-4.9" width="3.50" height="13.07" fill="#0f40fa"/><rect x="221.1" y="8.0" width="3.50" height="13.07" fill="#0f40fa"/><rect x="236.0" y="-30.5" width="3.49" height="13.07" fill="#0f70fa"/><rect x="236.0" y="-17.7" width="3.49" height="13.07" fill="#0f6ffa"/><rect x="236.0" y="-4.9" width="3.49" height="13.07" fill="#0f7efa"/><rect x="236.0" y="8.0" width="3.49" height="13.07" fill="#0fa6fa"/><rect x="239.3" y="-30.5" width="3.49" height="13.07" fill="#0f93fa"/><rect x="239.3" y="-17.7" width="3.49" height="13.07" fill="#0faafa"/><rect x="239.3" y="-4.9" width="3.49" height="13.07" fill="#0faefa"/><rect x="239.3" y="8.0" width="3.49" height="13.07" fill="#0fb2fa"/><rect x="242.5" y="-30.5" width="3.49" height="13.07" fill="#0f95fa"/><rect x="242.5" y="-17.7" width="3.49" height="13.07" fill="#0f9cfa"/><rect x="242.5" y="-4.9" width="3.49" height="13.07" fill="#0fa3fa"/><rect x="242.5" y="8.0" width="3.49" height="13.07" fill="#0fadfa"/><rect x="245.7" y="-30.5" width="3.49" height="13.07" fill="#0facfa"/><rect x="245.7" y="-17.7" width="3.49" height="13.07" fill="#0f9afa"/><rect x="245.7" y="-4.9" width="3.49" height="13.07" fill="#0facfa"/><rect x="245.7" y="8.0" width="3.49" height="13.07" fill="#0faefa"/><rect x="249.0" y="-30.5" width="3.49" height="13.07" fill="#0fa4fa"/><rect x="249.0" y="-17.7" width="3.49" height="13.07" fill="#0fb3fa"/><rect x="249.0" y="-4.9" width="3.49" height="13.07" fill="#0faefa"/><rect x="249.0" y="8.0" width="3.49" height="13.07" fill="#0f9ffa"/><rect x="252.2" y="-30.5" width="3.49" height="13.07" fill="#0fa4fa"/><rect x="252.2" y="-17.7" width="3.49" height="13.07" fill="#0faefa"/><rect x="252.2" y="-4.9" width="3.49" height="13.07" fill="#0f9ffa"/><rect x="252.2" y="8.0" width="3.49" height="13.07" fill="#0fb7fa"/><rect x="255.4" y="-30.5" width="3.49" height="13.07" fill="#0f8cfa"/><rect x="255.4" y="-17.7" width="3.49" height="13.07" fill="#0fa0fa"/><rect x="255.4" y="-4.9" width="3.49" height="13.07" fill="#0fa6fa"/><rect x="255.4" y="8.0" width="3.49" height="13.07" fill="#0f9efa"/><rect x="258.7" y="-30.5" width="3.49" height="13.07" fill="#0f76fa"/><rect x="258.7" y="-17.7" width="3.49" height="13.07" fill="#0f93fa"/><rect x="258.7" y="-4.9" width="3.49" height="13.07" fill="#0faefa"/><rect x="258.7" y="8.0" width="3.49" height="13.07" fill="#0fa7fa"/><rect x="261.9" y="-30.5" width="3.49" height="13.07" fill="#0f90fa"/><rect x="261.9" y="-17.7" width="3.49" height="13.07" fill="#0fa6fa"/><rect x="261.9" y="-4.9" width="3.49" height="13.07" fill="#0fbcfa"/><rect x="261.9" y="8.0" width="3.49" height="13.07" fill="#0fbdfa"/><rect x="265.2" y="-30.5" width="3.49" height="13.07" fill="#0fd7fa"/><rect x="265.2" y="-17.7" width="3.49" height="13.07" fill="#0fcffa"/><rect x="265.2" y="-4.9" width="3.49" height="13.07" fill="#0fddfa"/><rect x="265.2" y="8.0" width="3.49" height="13.07" fill="#0fe6fa"/><rect x="268.4" y="-30.5" width="3.49" height="13.07" fill="#0fd3fa"/><rect x="268.4" y="-17.7" width="3.49" height="13.07" fill="#0fd4fa"/><rect x="268.4" y="-4.9" width="3.49" height="13.07" fill="#0fe4fa"/><rect x="268.4" y="8.0" width="3.49" height="13.07" fill="#10f7fa"/><rect x="271.6" y="-30.5" width="3.49" height="13.07" fill="#12f7f8"/><rect x="271.6" y="-17.7" width="3.49" height="13.07" fill="#11f7f9"/><rect x="271.6" y="-4.9" width="3.49" height="13.07" fill="#0ff0fa"/><rect x="271.6" y="8.0" width="3.49" height="13.07" fill="#20f7e9"/><rect x="274.9" y="-30.5" width="3.49" height="13.07" fill="#0feffa"/><rect x="274.9" y="-17.7" width="3.49" height="13.07" fill="#29f7e0"/><rect x="274.9" y="-4.9" width="3.49" height="13.07" fill="#1df7ec"/><rect x="274.9" y="8.0" width="3.49" height="13.07" fill="#2cf7dd"/><rect x="278.1" y="-30.5" width="3.49" height="13.07" fill="#0fe8fa"/><rect x="278.1" y="-17.7" width="3.49" height="13.07" fill="#2ef7db"/><rect x="278.1" y="-4.9" width="3.49" height="13.07" fill="#0ff6fa"/><rect x="278.1" y="8.0" width="3.49" height="13.07" fill="#2ef7db"/><rect x="281.3" y="-30.5" width="3.49" height="13.07" fill="#19f7f1"/><rect x="281.3" y="-17.7" width="3.49" height="13.07" fill="#13f7f7"/><rect x="281.3" y="-4.9" width="3.49" height="13.07" fill="#1ef7eb"/><rect x="281.3" y="8.0" width="3.49" height="13.07" fill="#35f7d4"/><rect x="284.6" y="-30.5" width="3.49" height="13.07" fill="#43f7c6"/><rect x="284.6" y="-17.7" width="3.49" height="13.07" fill="#54f7b5"/><rect x="284.6" y="-4.9" width="3.49" height="13.07" fill="#66f7a3"/><rect x="284.6" y="8.0" width="3.49" height="13.07" fill="#5af7af"/><rect x="287.8" y="-30.5" width="3.49" height="13.07" fill="#3ef7cb"/><rect x="287.8" y="-17.7" width="3.49" height="13.07" fill="#56f7b4"/><rect x="287.8" y="-4.9" width="3.49" height="13.07" fill="#5af7af"/><rect x="287.8" y="8.0" width="3.49" height="13.07" fill="#6bf79f"/><rect x="298.7" y="-30.5" width="3.14" height="13.07" fill="#0ff7fa"/><rect x="298.7" y="-17.7" width="3.14" height="13.07" fill="#30f7d9"/><rect x="298.7" y="-4.9" width="3.14" height="13.07" fill="#27f7e3"/><rect x="298.7" y="8.0" width="3.14" height="13.07" fill="#48f7c1"/><rect x="301.6" y="-30.5" width="3.14" height="13.07" fill="#3af7cf"/><rect x="301.6" y="-17.7" width="3.14" height="13.07" fill="#38f7d2"/><rect x="301.6" y="-4.9" width="3.14" height="13.07" fill="#58f7b1"/><rect x="301.6" y="8.0" width="3.14" height="13.07" fill="#57f7b2"/><rect x="304.5" y="-30.5" width="3.14" height="13.07" fill="#0fecfa"/><rect x="304.5" y="-17.7" width="3.14" height="13.07" fill="#25f7e4"/><rect x="304.5" y="-4.9" width="3.14" height="13.07" fill="#1cf7ed"/><rect x="304.5" y="8.0" width="3.14" height="13.07" fill="#2df7dd"/><rect x="314.0" y="-30.5" width="3.42" height="13.07" fill="#0f90fa"/><rect x="314.0" y="-17.7" width="3.42" height="13.07" fill="#0fb1fa"/><rect x="314.0" y="-4.9" width="3.42" height="13.07" fill="#0fcdfa"/><rect x="314.0" y="8.0" width="3.42" height="13.07" fill="#0fdefa"/><rect x="317.1" y="-30.5" width="3.42" height="13.07" fill="#0f8ffa"/><rect x="317.1" y="-17.7" width="3.42" height="13.07" fill="#0fcafa"/><rect x="317.1" y="-4.9" width="3.42" height="13.07" fill="#0fd6fa"/><rect x="317.1" y="8.0" width="3.42" height="13.07" fill="#0fecfa"/><rect x="320.3" y="-30.5" width="3.42" height="13.07" fill="#0fbdfa"/><rect x="320.3" y="-17.7" width="3.42" height="13.07" fill="#0fcefa"/><rect x="320.3" y="-4.9" width="3.42" height="13.07" fill="#0febfa"/><rect x="320.3" y="8.0" width="3.42" height="13.07" fill="#26f7e4"/><rect x="323.5" y="-30.5" width="3.42" height="13.07" fill="#0f90fa"/><rect x="323.5" y="-17.7" width="3.42" height="13.07" fill="#0f9dfa"/><rect x="323.5" y="-4.9" width="3.42" height="13.07" fill="#0fbefa"/><rect x="323.5" y="8.0" width="3.42" height="13.07" fill="#0fdbfa"/><rect x="326.7" y="-30.5" width="3.42" height="13.07" fill="#0f9cfa"/><rect x="326.7" y="-17.7" width="3.42" height="13.07" fill="#0fbefa"/><rect x="326.7" y="-4.9" width="3.42" height="13.07" fill="#0fcdfa"/><rect x="326.7" y="8.0" width="3.42" height="13.07" fill="#0fd0fa"/><rect x="329.8" y="-30.5" width="3.42" height="13.07" fill="#0fbafa"/><rect x="329.8" y="-17.7" width="3.42" height="13.07" fill="#0fdbfa"/><rect x="329.8" y="-4.9" width="3.42" height="13.07" fill="#0fd5fa"/><rect x="329.8" y="8.0" width="3.42" height="13.07" fill="#1cf7ed"/><rect x="333.0" y="-30.5" width="3.42" height="13.07" fill="#0fa9fa"/><rect x="333.0" y="-17.7" width="3.42" height="13.07" fill="#0f99fa"/><rect x="333.0" y="-4.9" width="3.42" height="13.07" fill="#0fd2fa"/><rect x="333.0" y="8.0" width="3.42" height="13.07" fill="#0fcffa"/><rect x="336.2" y="-30.5" width="3.42" height="13.07" fill="#0f9cfa"/><rect x="336.2" y="-17.7" width="3.42" height="13.07" fill="#0fb5fa"/><rect x="336.2" y="-4.9" width="3.42" height="13.07" fill="#0fb7fa"/><rect x="336.2" y="8.0" width="3.42" height="13.07" fill="#0fd0fa"/><rect x="339.3" y="-30.5" width="3.42" height="13.07" fill="#0fbffa"/><rect x="339.3" y="-17.7" width="3.42" height="13.07" fill="#0faffa"/><rect x="339.3" y="-4.9" width="3.42" height="13.07" fill="#0fe0fa"/><rect x="339.3" y="8.0" width="3.42" height="13.07" fill="#15f7f5"/><rect x="342.5" y="-30.5" width="3.42" height="13.07" fill="#0fd1fa"/><rect x="342.5" y="-17.7" width="3.42" height="13.07" fill="#0fcffa"/><rect x="342.5" y="-4.9" width="3.42" height="13.07" fill="#21f7e9"/><rect x="342.5" y="8.0" width="3.42" height="13.07" fill="#1ef7ec"/><rect x="345.7" y="-30.5" width="3.42" height="13.07" fill="#0fd7fa"/><rect x="345.7" y="-17.7" width="3.42" height="13.07" fill="#0fe7fa"/><rect x="345.7" y="-4.9" width="3.42" height="13.07" fill="#0ff0fa"/><rect x="345.7" y="8.0" width="3.42" height="13.07" fill="#11f7f8"/><rect x="348.9" y="-30.5" width="3.42" height="13.07" fill="#0fdffa"/><rect x="348.9" y="-17.7" width="3.42" height="13.07" fill="#0fd5fa"/><rect x="348.9" y="-4.9" width="3.42" height="13.07" fill="#0ff1fa"/><rect x="348.9" y="8.0" width="3.42" height="13.07" fill="#2ef7db"/><rect x="352.0" y="-30.5" width="3.42" height="13.07" fill="#0fd2fa"/><rect x="352.0" y="-17.7" width="3.42" height="13.07" fill="#0fe9fa"/><rect x="352.0" y="-4.9" width="3.42" height="13.07" fill="#0ff5fa"/><rect x="352.0" y="8.0" width="3.42" height="13.07" fill="#30f7d9"/><rect x="358.3" y="-30.5" width="3.52" height="13.07" fill="#0fe9fa"/><rect x="358.3" y="-17.7" width="3.52" height="13.07" fill="#17f7f2"/><rect x="358.3" y="-4.9" width="3.52" height="13.07" fill="#2af7e0"/><rect x="358.3" y="8.0" width="3.52" height="13.07" fill="#38f7d1"/><rect x="361.5" y="-30.5" width="3.52" height="13.07" fill="#1ef7eb"/><rect x="361.5" y="-17.7" width="3.52" height="13.07" fill="#40f7ca"/><rect x="361.5" y="-4.9" width="3.52" height="13.07" fill="#45f7c4"/><rect x="361.5" y="8.0" width="3.52" height="13.07" fill="#41f7c8"/><rect x="364.8" y="-30.5" width="3.52" height="13.07" fill="#1ff7eb"/><rect x="364.8" y="-17.7" width="3.52" height="13.07" fill="#1df7ed"/><rect x="364.8" y="-4.9" width="3.52" height="13.07" fill="#1cf7ee"/><rect x="364.8" y="8.0" width="3.52" height="13.07" fill="#12f7f7"/><rect x="368.1" y="-30.5" width="3.52" height="13.07" fill="#0fd8fa"/><rect x="368.1" y="-17.7" width="3.52" height="13.07" fill="#0feffa"/><rect x="368.1" y="-4.9" width="3.52" height="13.07" fill="#2ff7da"/><rect x="368.1" y="8.0" width="3.52" height="13.07" fill="#2af7df"/><rect x="371.4" y="-30.5" width="3.52" height="13.07" fill="#0fe3fa"/><rect x="371.4" y="-17.7" width="3.52" height="13.07" fill="#0fedfa"/><rect x="371.4" y="-4.9" width="3.52" height="13.07" fill="#1ff7eb"/><rect x="371.4" y="8.0" width="3.52" height="13.07" fill="#29f7e0"/><rect x="374.6" y="-30.5" width="3.52" height="13.07" fill="#1ef7ec"/><rect x="374.6" y="-17.7" width="3.52" height="13.07" fill="#29f7e0"/><rect x="374.6" y="-4.9" width="3.52" height="13.07" fill="#4cf7be"/><rect x="374.6" y="8.0" width="3.52" height="13.07" fill="#4df7bd"/><rect x="377.9" y="-30.5" width="3.52" height="13.07" fill="#0fbffa"/><rect x="377.9" y="-17.7" width="3.52" height="13.07" fill="#0fbafa"/><rect x="377.9" y="-4.9" width="3.52" height="13.07" fill="#0fbbfa"/><rect x="377.9" y="8.0" width="3.52" height="13.07" fill="#0fddfa"/><rect x="384.2" y="-30.5" width="3.45" height="13.07" fill="#0fdbfa"/><rect x="384.2" y="-17.7" width="3.45" height="13.07" fill="#11f7f8"/><rect x="384.2" y="-4.9" width="3.45" height="13.07" fill="#25f7e4"/><rect x="384.2" y="8.0" width="3.45" height="13.07" fill="#23f7e6"/><rect x="387.4" y="-30.5" width="3.45" height="13.07" fill="#0faafa"/><rect x="387.4" y="-17.7" width="3.45" height="13.07" fill="#0fd7fa"/><rect x="387.4" y="-4.9" width="3.45" height="13.07" fill="#11f7f8"/><rect x="387.4" y="8.0" width="3.45" height="13.07" fill="#21f7e8"/><rect x="390.7" y="-30.5" width="3.45" height="13.07" fill="#3ff7cb"/><rect x="390.7" y="-17.7" width="3.45" height="13.07" fill="#3bf7cf"/><rect x="390.7" y="-4.9" width="3.45" height="13.07" fill="#5af7b0"/><rect x="390.7" y="8.0" width="3.45" height="13.07" fill="#4df7bc"/><rect x="393.9" y="-30.5" width="3.45" height="13.07" fill="#35f7d4"/><rect x="393.9" y="-17.7" width="3.45" height="13.07" fill="#42f7c8"/><rect x="393.9" y="-4.9" width="3.45" height="13.07" fill="#50f7b9"/><rect x="393.9" y="8.0" width="3.45" height="13.07" fill="#5af7af"/><rect x="397.1" y="-30.5" width="3.45" height="13.07" fill="#51f7b9"/><rect x="397.1" y="-17.7" width="3.45" height="13.07" fill="#4ff7ba"/><rect x="397.1" y="-4.9" width="3.45" height="13.07" fill="#6cf79d"/><rect x="397.1" y="8.0" width="3.45" height="13.07" fill="#70f799"/><rect x="400.3" y="-30.5" width="3.45" height="13.07" fill="#51f7b9"/><rect x="400.3" y="-17.7" width="3.45" height="13.07" fill="#74f796"/><rect x="400.3" y="-4.9" width="3.45" height="13.07" fill="#7ff78b"/><rect x="400.3" y="8.0" width="3.45" height="13.07" fill="#8ff77a"/><rect x="403.5" y="-30.5" width="3.45" height="13.07" fill="#59f7b1"/><rect x="403.5" y="-17.7" width="3.45" height="13.07" fill="#75f794"/><rect x="403.5" y="-4.9" width="3.45" height="13.07" fill="#90f77a"/><rect x="403.5" y="8.0" width="3.45" height="13.07" fill="#9ff76a"/><rect x="406.7" y="-30.5" width="3.45" height="13.07" fill="#88f782"/><rect x="406.7" y="-17.7" width="3.45" height="13.07" fill="#93f777"/><rect x="406.7" y="-4.9" width="3.45" height="13.07" fill="#9cf76e"/><rect x="406.7" y="8.0" width="3.45" height="13.07" fill="#99f771"/><rect x="409.9" y="-30.5" width="3.45" height="13.07" fill="#8ff77a"/><rect x="409.9" y="-17.7" width="3.45" height="13.07" fill="#abf75f"/><rect x="409.9" y="-4.9" width="3.45" height="13.07" fill="#b3f756"/><rect x="409.9" y="8.0" width="3.45" height="13.07" fill="#bdf74c"/><rect x="413.1" y="-30.5" width="3.45" height="13.07" fill="#84f786"/><rect x="413.1" y="-17.7" width="3.45" height="13.07" fill="#8ff77a"/><rect x="413.1" y="-4.9" width="3.45" height="13.07" fill="#8cf77d"/><rect x="413.1" y="8.0" width="3.45" height="13.07" fill="#a8f761"/><rect x="416.3" y="-30.5" width="3.45" height="13.07" fill="#98f771"/><rect x="416.3" y="-17.7" width="3.45" height="13.07" fill="#a0f76a"/><rect x="416.3" y="-4.9" width="3.45" height="13.07" fill="#a9f761"/><rect x="416.3" y="8.0" width="3.45" height="13.07" fill="#b9f751"/><rect x="419.5" y="-30.5" width="3.45" height="13.07" fill="#baf74f"/><rect x="419.5" y="-17.7" width="3.45" height="13.07" fill="#c5f744"/><rect x="419.5" y="-4.9" width="3.45" height="13.07" fill="#cbf73f"/><rect x="419.5" y="8.0" width="3.45" height="13.07" fill="#d6f733"/><rect x="422.7" y="-30.5" width="3.45" height="13.07" fill="#8df77d"/><rect x="422.7" y="-17.7" width="3.45" height="13.07" fill="#a5f764"/><rect x="422.7" y="-4.9" width="3.45" height="13.07" fill="#a8f761"/><rect x="422.7" y="8.0" width="3.45" height="13.07" fill="#bcf74e"/><rect x="425.9" y="-30.5" width="3.45" height="13.07" fill="#94f776"/><rect x="425.9" y="-17.7" width="3.45" height="13.07" fill="#98f771"/><rect x="425.9" y="-4.9" width="3.45" height="13.07" fill="#a9f761"/><rect x="425.9" y="8.0" width="3.45" height="13.07" fill="#aef75b"/><rect x="434.2" y="-30.5" width="3.74" height="13.07" fill="#82f788"/><rect x="434.2" y="-17.7" width="3.74" height="13.07" fill="#6ef79b"/><rect x="434.2" y="-4.9" width="3.74" height="13.07" fill="#72f798"/><rect x="434.2" y="8.0" width="3.74" height="13.07" fill="#69f7a1"/><rect x="437.7" y="-30.5" width="3.74" height="13.07" fill="#81f789"/><rect x="437.7" y="-17.7" width="3.74" height="13.07" fill="#86f783"/><rect x="437.7" y="-4.9" width="3.74" height="13.07" fill="#87f783"/><rect x="437.7" y="8.0" width="3.74" height="13.07" fill="#7df78c"/><rect x="441.1" y="-30.5" width="3.74" height="13.07" fill="#70f799"/><rect x="441.1" y="-17.7" width="3.74" height="13.07" fill="#76f794"/><rect x="441.1" y="-4.9" width="3.74" height="13.07" fill="#73f796"/><rect x="441.1" y="8.0" width="3.74" height="13.07" fill="#5df7ac"/><rect x="444.6" y="-30.5" width="3.74" height="13.07" fill="#8bf77e"/><rect x="444.6" y="-17.7" width="3.74" height="13.07" fill="#8af77f"/><rect x="444.6" y="-4.9" width="3.74" height="13.07" fill="#8cf77e"/><rect x="444.6" y="8.0" width="3.74" height="13.07" fill="#86f784"/><rect x="448.1" y="-30.5" width="3.74" height="13.07" fill="#8bf77e"/><rect x="448.1" y="-17.7" width="3.74" height="13.07" fill="#80f78a"/><rect x="448.1" y="-4.9" width="3.74" height="13.07" fill="#75f795"/><rect x="448.1" y="8.0" width="3.74" height="13.07" fill="#84f786"/><rect x="451.6" y="-30.5" width="3.74" height="13.07" fill="#6ff79a"/><rect x="451.6" y="-17.7" width="3.74" height="13.07" fill="#7df78c"/><rect x="451.6" y="-4.9" width="3.74" height="13.07" fill="#89f781"/><rect x="451.6" y="8.0" width="3.74" height="13.07" fill="#83f786"/><rect x="455.1" y="-30.5" width="3.74" height="13.07" fill="#75f795"/><rect x="455.1" y="-17.7" width="3.74" height="13.07" fill="#8af780"/><rect x="455.1" y="-4.9" width="3.74" height="13.07" fill="#90f779"/><rect x="455.1" y="8.0" width="3.74" height="13.07" fill="#81f788"/><rect x="464.7" y="-30.5" width="3.59" height="13.07" fill="#89f781"/><rect x="464.7" y="-17.7" width="3.59" height="13.07" fill="#94f776"/><rect x="464.7" y="-4.9" width="3.59" height="13.07" fill="#8af780"/><rect x="464.7" y="8.0" width="3.59" height="13.07" fill="#7df78d"/><rect x="468.1" y="-30.5" width="3.59" height="13.07" fill="#b5f754"/><rect x="468.1" y="-17.7" width="3.59" height="13.07" fill="#b0f75a"/><rect x="468.1" y="-4.9" width="3.59" height="13.07" fill="#9af76f"/><rect x="468.1" y="8.0" width="3.59" height="13.07" fill="#a2f767"/><rect x="471.4" y="-30.5" width="3.59" height="13.07" fill="#abf75f"/><rect x="471.4" y="-17.7" width="3.59" height="13.07" fill="#b6f753"/><rect x="471.4" y="-4.9" width="3.59" height="13.07" fill="#b6f754"/><rect x="471.4" y="8.0" width="3.59" height="13.07" fill="#aff75b"/><rect x="474.8" y="-30.5" width="3.59" height="13.07" fill="#abf75e"/><rect x="474.8" y="-17.7" width="3.59" height="13.07" fill="#b3f756"/><rect x="474.8" y="-4.9" width="3.59" height="13.07" fill="#aff75a"/><rect x="474.8" y="8.0" width="3.59" height="13.07" fill="#adf75d"/><rect x="478.1" y="-30.5" width="3.59" height="13.07" fill="#cff73a"/><rect x="478.1" y="-17.7" width="3.59" height="13.07" fill="#c8f741"/><rect x="478.1" y="-4.9" width="3.59" height="13.07" fill="#baf750"/><rect x="478.1" y="8.0" width="3.59" height="13.07" fill="#c9f741"/><rect x="481.4" y="-30.5" width="3.59" height="13.07" fill="#e3f726"/><rect x="481.4" y="-17.7" width="3.59" height="13.07" fill="#dff72b"/><rect x="481.4" y="-4.9" width="3.59" height="13.07" fill="#e3f727"/><rect x="481.4" y="8.0" width="3.59" height="13.07" fill="#dcf72d"/><rect x="484.8" y="-30.5" width="3.59" height="13.07" fill="#b4f756"/><rect x="484.8" y="-17.7" width="3.59" height="13.07" fill="#adf75d"/><rect x="484.8" y="-4.9" width="3.59" height="13.07" fill="#bff74a"/><rect x="484.8" y="8.0" width="3.59" height="13.07" fill="#a7f763"/><rect x="488.1" y="-30.5" width="3.59" height="13.07" fill="#cef73c"/><rect x="488.1" y="-17.7" width="3.59" height="13.07" fill="#c9f740"/><rect x="488.1" y="-4.9" width="3.59" height="13.07" fill="#c1f748"/><rect x="488.1" y="8.0" width="3.59" height="13.07" fill="#bff74b"/><rect x="491.5" y="-30.5" width="3.59" height="13.07" fill="#99f770"/><rect x="491.5" y="-17.7" width="3.59" height="13.07" fill="#92f777"/><rect x="491.5" y="-4.9" width="3.59" height="13.07" fill="#91f778"/><rect x="491.5" y="8.0" width="3.59" height="13.07" fill="#a2f767"/><rect x="494.8" y="-30.5" width="3.59" height="13.07" fill="#93f776"/><rect x="494.8" y="-17.7" width="3.59" height="13.07" fill="#82f788"/><rect x="494.8" y="-4.9" width="3.59" height="13.07" fill="#91f779"/><rect x="494.8" y="8.0" width="3.59" height="13.07" fill="#8cf77d"/><rect x="498.1" y="-30.5" width="3.59" height="13.07" fill="#a3f767"/><rect x="498.1" y="-17.7" width="3.59" height="13.07" fill="#90f77a"/><rect x="498.1" y="-4.9" width="3.59" height="13.07" fill="#94f775"/><rect x="498.1" y="8.0" width="3.59" height="13.07" fill="#89f781"/><rect x="501.5" y="-30.5" width="3.59" height="13.07" fill="#88f782"/><rect x="501.5" y="-17.7" width="3.59" height="13.07" fill="#86f784"/><rect x="501.5" y="-4.9" width="3.59" height="13.07" fill="#87f783"/><rect x="501.5" y="8.0" width="3.59" height="13.07" fill="#7df78d"/><rect x="504.8" y="-30.5" width="3.59" height="13.07" fill="#9ff76a"/><rect x="504.8" y="-17.7" width="3.59" height="13.07" fill="#99f771"/><rect x="504.8" y="-4.9" width="3.59" height="13.07" fill="#93f777"/><rect x="504.8" y="8.0" width="3.59" height="13.07" fill="#8ef77b"/><rect x="508.2" y="-30.5" width="3.59" height="13.07" fill="#64f7a6"/><rect x="508.2" y="-17.7" width="3.59" height="13.07" fill="#74f796"/><rect x="508.2" y="-4.9" width="3.59" height="13.07" fill="#63f7a7"/><rect x="508.2" y="8.0" width="3.59" height="13.07" fill="#59f7b1"/><rect x="511.5" y="-30.5" width="3.59" height="13.07" fill="#8ef77c"/><rect x="511.5" y="-17.7" width="3.59" height="13.07" fill="#86f783"/><rect x="511.5" y="-4.9" width="3.59" height="13.07" fill="#83f786"/><rect x="511.5" y="8.0" width="3.59" height="13.07" fill="#6df79d"/><rect x="514.9" y="-30.5" width="3.59" height="13.07" fill="#70f79a"/><rect x="514.9" y="-17.7" width="3.59" height="13.07" fill="#71f798"/><rect x="514.9" y="-4.9" width="3.59" height="13.07" fill="#62f7a8"/><rect x="514.9" y="8.0" width="3.59" height="13.07" fill="#60f7aa"/><rect x="518.2" y="-30.5" width="3.59" height="13.07" fill="#73f797"/><rect x="518.2" y="-17.7" width="3.59" height="13.07" fill="#6bf79e"/><rect x="518.2" y="-4.9" width="3.59" height="13.07" fill="#62f7a8"/><rect x="518.2" y="8.0" width="3.59" height="13.07" fill="#70f799"/><rect x="521.5" y="-30.5" width="3.59" height="13.07" fill="#62f7a8"/><rect x="521.5" y="-17.7" width="3.59" height="13.07" fill="#69f7a0"/><rect x="521.5" y="-4.9" width="3.59" height="13.07" fill="#53f7b7"/><rect x="521.5" y="8.0" width="3.59" height="13.07" fill="#4cf7bd"/><rect x="524.9" y="-30.5" width="3.59" height="13.07" fill="#5cf7ae"/><rect x="524.9" y="-17.7" width="3.59" height="13.07" fill="#42f7c7"/><rect x="524.9" y="-4.9" width="3.59" height="13.07" fill="#65f7a4"/><rect x="524.9" y="8.0" width="3.59" height="13.07" fill="#67f7a2"/><rect x="528.2" y="-30.5" width="3.59" height="13.07" fill="#43f7c7"/><rect x="528.2" y="-17.7" width="3.59" height="13.07" fill="#4ef7bc"/><rect x="528.2" y="-4.9" width="3.59" height="13.07" fill="#28f7e1"/><rect x="528.2" y="8.0" width="3.59" height="13.07" fill="#2ff7db"/><rect x="531.6" y="-30.5" width="3.59" height="13.07" fill="#4ef7bb"/><rect x="531.6" y="-17.7" width="3.59" height="13.07" fill="#32f7d8"/><rect x="531.6" y="-4.9" width="3.59" height="13.07" fill="#4df7bc"/><rect x="531.6" y="8.0" width="3.59" height="13.07" fill="#3af7cf"/><rect x="534.9" y="-30.5" width="3.59" height="13.07" fill="#60f7a9"/><rect x="534.9" y="-17.7" width="3.59" height="13.07" fill="#44f7c5"/><rect x="534.9" y="-4.9" width="3.59" height="13.07" fill="#55f7b5"/><rect x="534.9" y="8.0" width="3.59" height="13.07" fill="#40f7ca"/><rect x="538.3" y="-30.5" width="3.59" height="13.07" fill="#54f7b6"/><rect x="538.3" y="-17.7" width="3.59" height="13.07" fill="#53f7b6"/><rect x="538.3" y="-4.9" width="3.59" height="13.07" fill="#4ef7bc"/><rect x="538.3" y="8.0" width="3.59" height="13.07" fill="#53f7b7"/><rect x="541.6" y="-30.5" width="3.59" height="13.07" fill="#5ef7ac"/><rect x="541.6" y="-17.7" width="3.59" height="13.07" fill="#63f7a7"/><rect x="541.6" y="-4.9" width="3.59" height="13.07" fill="#6df79c"/><rect x="541.6" y="8.0" width="3.59" height="13.07" fill="#5bf7ae"/><rect x="544.9" y="-30.5" width="3.59" height="13.07" fill="#4ff7bb"/><rect x="544.9" y="-17.7" width="3.59" height="13.07" fill="#45f7c4"/><rect x="544.9" y="-4.9" width="3.59" height="13.07" fill="#4ef7bc"/><rect x="544.9" y="8.0" width="3.59" height="13.07" fill="#3cf7cd"/><rect x="548.3" y="-30.5" width="3.59" height="13.07" fill="#7cf78d"/><rect x="548.3" y="-17.7" width="3.59" height="13.07" fill="#4af7bf"/><rect x="548.3" y="-4.9" width="3.59" height="13.07" fill="#48f7c2"/><rect x="548.3" y="8.0" width="3.59" height="13.07" fill="#38f7d1"/><rect x="551.6" y="-30.5" width="3.59" height="13.07" fill="#4bf7bf"/><rect x="551.6" y="-17.7" width="3.59" height="13.07" fill="#3df7cc"/><rect x="551.6" y="-4.9" width="3.59" height="13.07" fill="#46f7c3"/><rect x="551.6" y="8.0" width="3.59" height="13.07" fill="#14f7f5"/><rect x="555.0" y="-30.5" width="3.59" height="13.07" fill="#5df7ad"/><rect x="555.0" y="-17.7" width="3.59" height="13.07" fill="#51f7b9"/><rect x="555.0" y="-4.9" width="3.59" height="13.07" fill="#48f7c1"/><rect x="555.0" y="8.0" width="3.59" height="13.07" fill="#41f7c8"/><rect x="558.3" y="-30.5" width="3.59" height="13.07" fill="#5af7b0"/><rect x="558.3" y="-17.7" width="3.59" height="13.07" fill="#53f7b6"/><rect x="558.3" y="-4.9" width="3.59" height="13.07" fill="#56f7b3"/><rect x="558.3" y="8.0" width="3.59" height="13.07" fill="#43f7c6"/><rect x="561.7" y="-30.5" width="3.59" height="13.07" fill="#6ff79a"/><rect x="561.7" y="-17.7" width="3.59" height="13.07" fill="#49f7c0"/><rect x="561.7" y="-4.9" width="3.59" height="13.07" fill="#47f7c2"/><rect x="561.7" y="8.0" width="3.59" height="13.07" fill="#50f7ba"/><rect x="565.0" y="-30.5" width="3.59" height="13.07" fill="#52f7b8"/><rect x="565.0" y="-17.7" width="3.59" height="13.07" fill="#66f7a4"/><rect x="565.0" y="-4.9" width="3.59" height="13.07" fill="#4bf7bf"/><rect x="565.0" y="8.0" width="3.59" height="13.07" fill="#3af7d0"/><rect x="568.3" y="-30.5" width="3.59" height="13.07" fill="#85f784"/><rect x="568.3" y="-17.7" width="3.59" height="13.07" fill="#55f7b5"/><rect x="568.3" y="-4.9" width="3.59" height="13.07" fill="#53f7b6"/><rect x="568.3" y="8.0" width="3.59" height="13.07" fill="#56f7b4"/><rect x="578.8" y="-30.5" width="3.50" height="13.07" fill="#0ff3fa"/><rect x="578.8" y="-17.7" width="3.50" height="13.07" fill="#0fe0fa"/><rect x="578.8" y="-4.9" width="3.50" height="13.07" fill="#0fd5fa"/><rect x="578.8" y="8.0" width="3.50" height="13.07" fill="#0fdffa"/><rect x="582.1" y="-30.5" width="3.50" height="13.07" fill="#0faefa"/><rect x="582.1" y="-17.7" width="3.50" height="13.07" fill="#0fb7fa"/><rect x="582.1" y="-4.9" width="3.50" height="13.07" fill="#0fd2fa"/><rect x="582.1" y="8.0" width="3.50" height="13.07" fill="#0f9bfa"/><rect x="585.3" y="-30.5" width="3.50" height="13.07" fill="#0fd6fa"/><rect x="585.3" y="-17.7" width="3.50" height="13.07" fill="#0fcffa"/><rect x="585.3" y="-4.9" width="3.50" height="13.07" fill="#0fddfa"/><rect x="585.3" y="8.0" width="3.50" height="13.07" fill="#0fccfa"/><rect x="588.6" y="-30.5" width="3.50" height="13.07" fill="#0fbcfa"/><rect x="588.6" y="-17.7" width="3.50" height="13.07" fill="#0fb4fa"/><rect x="588.6" y="-4.9" width="3.50" height="13.07" fill="#0fd1fa"/><rect x="588.6" y="8.0" width="3.50" height="13.07" fill="#0fb0fa"/><rect x="591.8" y="-30.5" width="3.50" height="13.07" fill="#0fb0fa"/><rect x="591.8" y="-17.7" width="3.50" height="13.07" fill="#0facfa"/><rect x="591.8" y="-4.9" width="3.50" height="13.07" fill="#0f9bfa"/><rect x="591.8" y="8.0" width="3.50" height="13.07" fill="#0fb1fa"/><rect x="595.1" y="-30.5" width="3.50" height="13.07" fill="#0fb8fa"/><rect x="595.1" y="-17.7" width="3.50" height="13.07" fill="#0fc1fa"/><rect x="595.1" y="-4.9" width="3.50" height="13.07" fill="#0fb5fa"/><rect x="595.1" y="8.0" width="3.50" height="13.07" fill="#0faffa"/><rect x="598.3" y="-30.5" width="3.50" height="13.07" fill="#0fb6fa"/><rect x="598.3" y="-17.7" width="3.50" height="13.07" fill="#0fa3fa"/><rect x="598.3" y="-4.9" width="3.50" height="13.07" fill="#0f9cfa"/><rect x="598.3" y="8.0" width="3.50" height="13.07" fill="#0fa2fa"/><rect x="601.5" y="-30.5" width="3.50" height="13.07" fill="#0fb4fa"/><rect x="601.5" y="-17.7" width="3.50" height="13.07" fill="#0f9dfa"/><rect x="601.5" y="-4.9" width="3.50" height="13.07" fill="#0fa9fa"/><rect x="601.5" y="8.0" width="3.50" height="13.07" fill="#0fb2fa"/><rect x="609.9" y="-30.5" width="3.48" height="13.07" fill="#0f91fa"/><rect x="609.9" y="-17.7" width="3.48" height="13.07" fill="#0fa3fa"/><rect x="609.9" y="-4.9" width="3.48" height="13.07" fill="#0fc5fa"/><rect x="609.9" y="8.0" width="3.48" height="13.07" fill="#0fdffa"/><rect x="613.1" y="-30.5" width="3.48" height="13.07" fill="#0f98fa"/><rect x="613.1" y="-17.7" width="3.48" height="13.07" fill="#0fb9fa"/><rect x="613.1" y="-4.9" width="3.48" height="13.07" fill="#0fbefa"/><rect x="613.1" y="8.0" width="3.48" height="13.07" fill="#0fcefa"/><rect x="616.3" y="-30.5" width="3.48" height="13.07" fill="#0f85fa"/><rect x="616.3" y="-17.7" width="3.48" height="13.07" fill="#0f99fa"/><rect x="616.3" y="-4.9" width="3.48" height="13.07" fill="#0fbcfa"/><rect x="616.3" y="8.0" width="3.48" height="13.07" fill="#0fbdfa"/><rect x="619.6" y="-30.5" width="3.48" height="13.07" fill="#0fa7fa"/><rect x="619.6" y="-17.7" width="3.48" height="13.07" fill="#0facfa"/><rect x="619.6" y="-4.9" width="3.48" height="13.07" fill="#0fc0fa"/><rect x="619.6" y="8.0" width="3.48" height="13.07" fill="#0fdffa"/><rect x="622.8" y="-30.5" width="3.48" height="13.07" fill="#0fd2fa"/><rect x="622.8" y="-17.7" width="3.48" height="13.07" fill="#0fccfa"/><rect x="622.8" y="-4.9" width="3.48" height="13.07" fill="#0fd6fa"/><rect x="622.8" y="8.0" width="3.48" height="13.07" fill="#0fd1fa"/><rect x="626.0" y="-30.5" width="3.48" height="13.07" fill="#0fb9fa"/><rect x="626.0" y="-17.7" width="3.48" height="13.07" fill="#0feefa"/><rect x="626.0" y="-4.9" width="3.48" height="13.07" fill="#0fe2fa"/><rect x="626.0" y="8.0" width="3.48" height="13.07" fill="#0ff7fa"/><rect x="629.2" y="-30.5" width="3.48" height="13.07" fill="#0fc5fa"/><rect x="629.2" y="-17.7" width="3.48" height="13.07" fill="#0fcefa"/><rect x="629.2" y="-4.9" width="3.48" height="13.07" fill="#0ff4fa"/><rect x="629.2" y="8.0" width="3.48" height="13.07" fill="#10f7fa"/><rect x="632.5" y="-30.5" width="3.48" height="13.07" fill="#0fd1fa"/><rect x="632.5" y="-17.7" width="3.48" height="13.07" fill="#0ff5fa"/><rect x="632.5" y="-4.9" width="3.48" height="13.07" fill="#16f7f4"/><rect x="632.5" y="8.0" width="3.48" height="13.07" fill="#1cf7ed"/><rect x="635.7" y="-30.5" width="3.48" height="13.07" fill="#35f7d5"/><rect x="635.7" y="-17.7" width="3.48" height="13.07" fill="#46f7c4"/><rect x="635.7" y="-4.9" width="3.48" height="13.07" fill="#4bf7be"/><rect x="635.7" y="8.0" width="3.48" height="13.07" fill="#59f7b0"/><rect x="638.9" y="-30.5" width="3.48" height="13.07" fill="#2cf7de"/><rect x="638.9" y="-17.7" width="3.48" height="13.07" fill="#54f7b5"/><rect x="638.9" y="-4.9" width="3.48" height="13.07" fill="#5ff7aa"/><rect x="638.9" y="8.0" width="3.48" height="13.07" fill="#54f7b6"/><rect x="642.1" y="-30.5" width="3.48" height="13.07" fill="#6cf79d"/><rect x="642.1" y="-17.7" width="3.48" height="13.07" fill="#6ff79b"/><rect x="642.1" y="-4.9" width="3.48" height="13.07" fill="#87f783"/><rect x="642.1" y="8.0" width="3.48" height="13.07" fill="#84f786"/><rect x="645.4" y="-30.5" width="3.48" height="13.07" fill="#61f7a9"/><rect x="645.4" y="-17.7" width="3.48" height="13.07" fill="#73f796"/><rect x="645.4" y="-4.9" width="3.48" height="13.07" fill="#76f794"/><rect x="645.4" y="8.0" width="3.48" height="13.07" fill="#8af780"/><rect x="658.8" y="-30.5" width="3.45" height="13.07" fill="#7bf78e"/><rect x="658.8" y="-17.7" width="3.45" height="13.07" fill="#95f774"/><rect x="658.8" y="-4.9" width="3.45" height="13.07" fill="#a0f76a"/><rect x="658.8" y="8.0" width="3.45" height="13.07" fill="#aaf75f"/><rect x="662.0" y="-30.5" width="3.45" height="13.07" fill="#78f792"/><rect x="662.0" y="-17.7" width="3.45" height="13.07" fill="#9df76d"/><rect x="662.0" y="-4.9" width="3.45" height="13.07" fill="#b0f759"/><rect x="662.0" y="8.0" width="3.45" height="13.07" fill="#bbf74e"/><rect x="665.2" y="-30.5" width="3.45" height="13.07" fill="#5cf7ae"/><rect x="665.2" y="-17.7" width="3.45" height="13.07" fill="#82f787"/><rect x="665.2" y="-4.9" width="3.45" height="13.07" fill="#8ef77c"/><rect x="665.2" y="8.0" width="3.45" height="13.07" fill="#aaf760"/><rect x="668.4" y="-30.5" width="3.45" height="13.07" fill="#88f781"/><rect x="668.4" y="-17.7" width="3.45" height="13.07" fill="#96f773"/><rect x="668.4" y="-4.9" width="3.45" height="13.07" fill="#a1f769"/><rect x="668.4" y="8.0" width="3.45" height="13.07" fill="#b3f756"/><rect x="671.6" y="-30.5" width="3.45" height="13.07" fill="#85f784"/><rect x="671.6" y="-17.7" width="3.45" height="13.07" fill="#99f770"/><rect x="671.6" y="-4.9" width="3.45" height="13.07" fill="#a8f762"/><rect x="671.6" y="8.0" width="3.45" height="13.07" fill="#b5f754"/><rect x="674.8" y="-30.5" width="3.45" height="13.07" fill="#8bf77e"/><rect x="674.8" y="-17.7" width="3.45" height="13.07" fill="#a1f768"/><rect x="674.8" y="-4.9" width="3.45" height="13.07" fill="#b0f759"/><rect x="674.8" y="8.0" width="3.45" height="13.07" fill="#b1f758"/><rect x="678.0" y="-30.5" width="3.45" height="13.07" fill="#8cf77d"/><rect x="678.0" y="-17.7" width="3.45" height="13.07" fill="#98f771"/><rect x="678.0" y="-4.9" width="3.45" height="13.07" fill="#b2f757"/><rect x="678.0" y="8.0" width="3.45" height="13.07" fill="#c3f747"/></g>
<rect x="171.8" y="0" width="1.400" height="353" fill="#fff" fill-opacity="0.60"/>
<rect x="436.8" y="0" width="1.400" height="353" fill="#fff" fill-opacity="0.25"/>
<rect x="701.8" y="0" width="1.400" height="353" fill="#fff" fill-opacity="0.22"/>
<rect x="967.6" y="0" width="1.400" height="353" fill="#fff" fill-opacity="0.60"/>
<line x1="60" y1="-20.91" x2="838" y2="130.18" stroke="#dc3434" stroke-opacity="0.78" stroke-width="2.700"/>
<g transform="translate(841.500 130.300) rotate(11)" fill="#30d22e" stroke="none"><path d="M-10 -1.100L7 -1.400L10 0L7 1.400L-10 1.100z"/><path d="M-0.800 -18L1.400 -18L2.800 0L1.400 18L-0.800 18L0.600 0z"/><path d="M-10 -5L-8 -5L-7 0L-8 5L-10 5L-9.300 0z"/></g>
<g filter="url(#sh)">
<rect x="52" y="0" width="4.400" height="146" fill="#fff" stroke="#8a8f99" stroke-width="0.800"/>
<rect x="46" y="-10" width="16.400" height="17.500" rx="3" fill="#fff" stroke="#9aa0aa" stroke-width="0.600"/>
<rect x="45" y="65.800" width="17.500" height="9.200" rx="2.500" fill="#fff" stroke="#9aa0aa" stroke-width="0.600"/>
<rect x="46" y="142" width="16.400" height="17.500" rx="3" fill="#fff" stroke="#9aa0aa" stroke-width="0.600"/>
</g>
<rect x="53.400" y="0" width="1.600" height="5" fill="#777"/>
<rect x="49.800" y="69.300" width="8.400" height="1.800" fill="#8a8a8a"/>
<rect x="49.800" y="149.300" width="8.400" height="2.300" fill="#777"/>
<rect x="11" y="22.400" width="13" height="298.800" fill="url(#jetbar)"/>
<rect x="25" y="29.7" width="17.800" height="10.600" fill="#fff"/>
<rect x="21.500" y="34.5" width="3.500" height="0.900" fill="#222"/>
<text x="33.800" y="38.5" font-family="'DejaVu Sans Condensed','DejaVu Sans',sans-serif" font-size="9.700" fill="#111" text-anchor="middle" textLength="15.200" lengthAdjust="spacingAndGlyphs">315</text>
<rect x="25" y="67.0" width="17.800" height="10.600" fill="#fff"/>
<rect x="21.500" y="71.8" width="3.500" height="0.900" fill="#222"/>
<text x="33.800" y="75.8" font-family="'DejaVu Sans Condensed','DejaVu Sans',sans-serif" font-size="9.700" fill="#111" text-anchor="middle" textLength="15.200" lengthAdjust="spacingAndGlyphs">300</text>
<rect x="25" y="104.3" width="17.800" height="10.600" fill="#fff"/>
<rect x="21.500" y="109.1" width="3.500" height="0.900" fill="#222"/>
<text x="33.800" y="113.1" font-family="'DejaVu Sans Condensed','DejaVu Sans',sans-serif" font-size="9.700" fill="#111" text-anchor="middle" textLength="15.200" lengthAdjust="spacingAndGlyphs">285</text>
<rect x="25" y="141.6" width="17.800" height="10.600" fill="#fff"/>
<rect x="21.500" y="146.4" width="3.500" height="0.900" fill="#222"/>
<text x="33.800" y="150.4" font-family="'DejaVu Sans Condensed','DejaVu Sans',sans-serif" font-size="9.700" fill="#111" text-anchor="middle" textLength="15.200" lengthAdjust="spacingAndGlyphs">270</text>
<rect x="25" y="178.9" width="17.800" height="10.600" fill="#fff"/>
<rect x="21.500" y="183.7" width="3.500" height="0.900" fill="#222"/>
<text x="33.800" y="187.7" font-family="'DejaVu Sans Condensed','DejaVu Sans',sans-serif" font-size="9.700" fill="#111" text-anchor="middle" textLength="15.200" lengthAdjust="spacingAndGlyphs">255</text>
<rect x="25" y="216.2" width="17.800" height="10.600" fill="#fff"/>
<rect x="21.500" y="221.0" width="3.500" height="0.900" fill="#222"/>
<text x="33.800" y="225.0" font-family="'DejaVu Sans Condensed','DejaVu Sans',sans-serif" font-size="9.700" fill="#111" text-anchor="middle" textLength="15.200" lengthAdjust="spacingAndGlyphs">240</text>
<rect x="25" y="253.5" width="17.800" height="10.600" fill="#fff"/>
<rect x="21.500" y="258.3" width="3.500" height="0.900" fill="#222"/>
<text x="33.800" y="262.3" font-family="'DejaVu Sans Condensed','DejaVu Sans',sans-serif" font-size="9.700" fill="#111" text-anchor="middle" textLength="15.200" lengthAdjust="spacingAndGlyphs">225</text>
<rect x="25" y="290.8" width="17.800" height="10.600" fill="#fff"/>
<rect x="21.500" y="295.6" width="3.500" height="0.900" fill="#222"/>
<text x="33.800" y="299.6" font-family="'DejaVu Sans Condensed','DejaVu Sans',sans-serif" font-size="9.700" fill="#111" text-anchor="middle" textLength="15.200" lengthAdjust="spacingAndGlyphs">210</text>
<text x="9.500" y="342.500" font-family="'Liberation Serif',serif" font-size="22" fill="#fff" textLength="62" lengthAdjust="spacingAndGlyphs" style="text-shadow:0 1px 1.500px rgba(0,0,0,0.550)">Google</text>
</svg>
</div>
<svg class="abs grip" style="left:1161px;top:355px" viewBox="0 0 12 12"><circle cx="10" cy="10" r="1.5" fill="#000"/><circle cx="6" cy="10" r="1.5" fill="#666"/><circle cx="10" cy="6" r="1.5" fill="#999"/><circle cx="2" cy="10" r="1.4" fill="#ddd"/><circle cx="6" cy="6" r="1.4" fill="#ddd"/><circle cx="10" cy="2" r="1.4" fill="#ddd"/></svg>

<!-- ============ LEFT FORM PANEL ============ -->
<div class="abs panel" id="formpanel"></div>
<div class="abs" id="formwhite">

<div class="abs inp" style="left:-40px;top:-20px;width:154px;height:23px"></div>
<div class="abs" style="left:121px;top:-20px;width:58px;height:27px;background:#e6e6e6;border:1px solid #c8c8c8;border-radius:4px;box-sizing:border-box"></div>
<div class="abs" style="right:149px;top:30px;font-weight:bold;font-size:17.5px;color:#000;white-space:nowrap">Or connect using the fields below</div>
<div class="abs lbl" style="left:-80px;top:77px">Server</div>
<div class="abs inp" style="left:-40px;top:93px;width:283px;height:32px"></div>
<div class="abs lbl" style="left:-80px;top:137px">Port</div>
<div class="abs inp" style="left:-40px;top:153px;width:76px;height:32px"></div>
<svg class="abs" style="left:49px;top:161px" width="14" height="14" viewBox="0 0 14 14"><rect x="1" y="2.500" width="9.500" height="9.500" rx="2" fill="none" stroke="#222" stroke-width="1.600"/><path d="M3.300 6.800l2.500 2.600l6.300-6.600" fill="none" stroke="#222" stroke-width="2.200"/></svg>
<div class="abs" style="left:65px;top:160px;font-size:12.9px;color:#222;white-space:nowrap">Secure (SSL/TLS)</div>
<div class="abs lbl" style="right:366px;top:194px">Username</div>
<div class="abs lbl" style="left:108px;top:194px">Password</div>
<div class="abs inp" style="left:-40px;top:213px;width:128px;height:32px"></div>
<div class="abs inp" style="left:100px;top:213px;width:139px;height:32px"></div>
<div class="abs lbl" style="right:366px;top:254px">Nickname</div>
<div class="abs lbl" style="left:108px;top:254px">Real Name</div>
<div class="abs inp" style="left:-40px;top:273px;width:128px;height:32px"></div>
<div class="abs inp" style="left:100px;top:273px;width:139px;height:32px"></div>
<div class="abs" style="right:164px;top:314px;font-weight:bold;font-style:italic;font-size:9.200px;color:#333;white-space:nowrap"><span style="font-style:normal;font-size:10px">Channels</span> (Separate multiple channels with a comma)</div>
<div class="abs inp" style="left:-40px;top:333px;width:283px;height:32px"></div>
<div class="abs" style="left:-50px;top:390px;width:79px;height:32px;box-sizing:border-box;border:1px solid #0a50b8;border-radius:4px;background:linear-gradient(#1585e6,#0048cf);color:#fff;font-weight:bold;font-size:12.5px;text-align:right;padding:9px 15px 0 0;white-space:nowrap">Connect</div>

</div>
<div class="abs" id="formbar"></div>
<svg class="abs grip" style="left:358.200px;top:927px" viewBox="0 0 12 12"><circle cx="10" cy="10" r="1.5" fill="#000"/><circle cx="6" cy="10" r="1.5" fill="#666"/><circle cx="10" cy="6" r="1.5" fill="#999"/><circle cx="2" cy="10" r="1.4" fill="#ddd"/><circle cx="6" cy="6" r="1.4" fill="#ddd"/><circle cx="10" cy="2" r="1.4" fill="#ddd"/></svg>

<!-- ============ RIGHT CAMERA PANEL ============ -->
<div class="abs panel" id="campanel"></div>
<svg class="abs" style="left:396px;top:401px" width="15" height="12" viewBox="0 0 15 12"><path d="M1.5 2.2h2.6l1-1.7h4.8l1 1.7h2.6a1.3 1.3 0 0 1 1.3 1.3v6.9a1.3 1.3 0 0 1-1.3 1.3h-11a1.3 1.3 0 0 1-1.3-1.3V3.500a1.300 1.300 0 0 1 1.300-1.300z" fill="#222"/><circle cx="7.500" cy="6.700" r="3.100" fill="#eee"/><circle cx="7.500" cy="6.700" r="1.900" fill="#222"/></svg>
<div class="abs" id="camtitle">Airborne Science Camera Feed</div>
<div class="abs" id="toolbar"></div>
<div class="abs tlbl" style="left:408px;top:434px">1. Select Aircraft</div>
<div class="abs sel" style="left:501px;top:428px;width:198px"><span class="abs" style="left:6px;top:3.500px">Global Hawk AV6 (NASA872)</span><span class="abs" style="right:0;top:0;width:17px;height:21px;background:linear-gradient(#fdfdfd,#e9ecf2);border-left:1px solid #e2e6ee"></span><svg class="abs" style="right:5px;top:9px" width="8" height="5" viewBox="0 0 8 5"><path d="M0 0h8L4 4.500z" fill="#a3b6db"/></svg></div>
<div class="abs tlbl" style="left:712px;top:434px">2. Select Camera</div>
<div class="abs sel" style="left:807px;top:428px;width:158px;border-color:#7f9db9"><span class="abs" style="left:6px;top:3.500px;font-size:12.5px">CPL Quicklook Product</span><span class="abs" style="right:0;top:0;width:17px;height:21px;background:linear-gradient(#cfe2fb,#8fb8ee);border-left:1px solid #86a9dc"></span><svg class="abs" style="right:5px;top:9px" width="8" height="5" viewBox="0 0 8 5"><path d="M0 0h8L4 4.500z" fill="#5575a8"/></svg></div>
<div class="abs" id="plot">
<svg class="abs" style="left:0;top:0" width="778" height="460" viewBox="395 455 778 460" font-family="'Liberation Sans',sans-serif" fill="#fff">
<defs>
<linearGradient id="bgv" gradientUnits="userSpaceOnUse" x1="0" y1="520" x2="0" y2="833"><stop offset="0.0000" stop-color="#383838"/><stop offset="0.0288" stop-color="#313131"/><stop offset="0.0543" stop-color="#242424"/><stop offset="0.1278" stop-color="#1d1d1d"/><stop offset="0.2556" stop-color="#1a1a1a"/><stop offset="0.4473" stop-color="#171717"/><stop offset="0.5751" stop-color="#101010"/><stop offset="0.7668" stop-color="#0c0c0c"/><stop offset="1.0000" stop-color="#0b0b0b"/></linearGradient>
<linearGradient id="cbar" x1="0" y1="0" x2="0" y2="1"><stop offset="0.0000" stop-color="rgb(255,20,147)"/><stop offset="0.0588" stop-color="rgb(255,0,70)"/><stop offset="0.1176" stop-color="rgb(255,0,0)"/><stop offset="0.1618" stop-color="rgb(255,90,0)"/><stop offset="0.2059" stop-color="rgb(255,170,0)"/><stop offset="0.2647" stop-color="rgb(255,255,0)"/><stop offset="0.3382" stop-color="rgb(170,255,0)"/><stop offset="0.4118" stop-color="rgb(60,255,0)"/><stop offset="0.4706" stop-color="rgb(0,255,0)"/><stop offset="0.5294" stop-color="rgb(0,255,90)"/><stop offset="0.5882" stop-color="rgb(0,255,190)"/><stop offset="0.6324" stop-color="rgb(0,240,255)"/><stop offset="0.7059" stop-color="rgb(0,150,255)"/><stop offset="0.7794" stop-color="rgb(0,70,255)"/><stop offset="0.8382" stop-color="rgb(0,0,255)"/><stop offset="0.8824" stop-color="rgb(0,0,200)"/><stop offset="0.9412" stop-color="rgb(0,0,95)"/><stop offset="1.0000" stop-color="rgb(0,0,0)"/></linearGradient>
<clipPath id="hclip"><rect x="547" y="520" width="523" height="313"/></clipPath>
<filter id="heat" filterUnits="userSpaceOnUse" x="543" y="516" width="531" height="321" color-interpolation-filters="sRGB">
<feGaussianBlur in="SourceGraphic" stdDeviation="1.3 1.6" result="b"/>
<feTurbulence type="fractalNoise" baseFrequency="0.3 0.13" numOctaves="2" seed="7" result="t1"/>
<feColorMatrix in="t1" type="matrix" values="1 0 0 0 0  1 0 0 0 0  1 0 0 0 0  0 0 0 0 1" result="n1"/>
<feTurbulence type="fractalNoise" baseFrequency="0.3 0.005" numOctaves="1" seed="23" result="t2"/>
<feColorMatrix in="t2" type="matrix" values="1 0 0 0 0  1 0 0 0 0  1 0 0 0 0  0 0 0 0 1" result="n2"/>
<feComposite in="n1" in2="n2" operator="arithmetic" k1="0" k2="0.66" k3="0.34" k4="0" result="nm"/>
<feColorMatrix in="nm" type="matrix" values="2.7 0 0 0 -0.85  2.7 0 0 0 -0.85  2.7 0 0 0 -0.85  0 0 0 0 1" result="n"/>
<feComposite in="b" in2="n" operator="arithmetic" k1="1.2" k2="0.4" k3="-0.018" k4="0.009" result="m"/>
<feComponentTransfer in="m"><feFuncR type="table" tableValues="0.000 0.000 0.000 0.000 0.000 0.000 0.000 0.000 0.000 0.000 0.000 0.000 0.000 0.000 0.000 0.000 0.000 0.000 0.000 0.118 0.235 0.408 0.580 0.733 0.867 1.000 1.000 1.000 1.000 1.000 1.000 1.000 1.000 1.000 1.000"/><feFuncG type="table" tableValues="0.000 0.000 0.000 0.000 0.000 0.000 0.069 0.206 0.337 0.463 0.588 0.729 0.871 0.961 1.000 1.000 1.000 1.000 1.000 1.000 1.000 1.000 1.000 1.000 1.000 1.000 0.833 0.667 0.458 0.235 0.000 0.000 0.000 0.039 0.078"/><feFuncB type="table" tableValues="0.000 0.186 0.373 0.578 0.784 0.928 1.000 1.000 1.000 1.000 1.000 1.000 1.000 0.915 0.745 0.549 0.353 0.176 0.000 0.000 0.000 0.000 0.000 0.000 0.000 0.000 0.000 0.000 0.000 0.000 0.000 0.137 0.275 0.425 0.576"/><feFuncA type="linear" slope="0" intercept="1"/></feComponentTransfer>
</filter>
<filter id="soft" filterUnits="userSpaceOnUse" x="527" y="500" width="563" height="353"><feGaussianBlur stdDeviation="5 4"/></filter>
</defs>
<rect x="395" y="455" width="778" height="460" fill="#000"/>
<g clip-path="url(#hclip)"><g filter="url(#heat)"><rect x="543" y="516" width="531" height="321" fill="url(#bgv)"/><g filter="url(#soft)"><polygon points="547,580 600,580 600,600 547,600" fill="#313131"/><polygon points="560,600 625,586 720,582 720,600 640,602 600,612 565,616" fill="#2f2f2f"/><polygon points="735,582 800,582 800,600 735,600" fill="#2f2f2f"/><polygon points="547,620 600,620 700,622 710,640 700,664 620,664 600,656 547,656" fill="#333333"/><polygon points="680,644 760,644 800,636 900,620 905,640 850,656 790,660 775,680 740,688 700,684 680,668" fill="#313131"/><polygon points="895,625 940,618 1000,604 1070,592 1070,650 1000,650 965,672 920,678 900,662" fill="#333333"/></g><polyline points="547,589.5 572,589.5 596,589.5" fill="none" stroke="#5e5e5e" stroke-width="12" stroke-linecap="round" stroke-linejoin="round"/><polyline points="549,589 592,589" fill="none" stroke="#787878" stroke-width="7" stroke-linecap="round" stroke-linejoin="round"/><polyline points="566,610 585,605 603,600 622,595 640,591" fill="none" stroke="#474747" stroke-width="9" stroke-linecap="round" stroke-linejoin="round"/><polyline points="585,603 610,597 630,592" fill="none" stroke="#5a5a5a" stroke-width="4" stroke-linecap="round" stroke-linejoin="round"/><polyline points="618,593 640,591 660,590.5 690,590 718,591" fill="none" stroke="#5a5a5a" stroke-width="13" stroke-linecap="round" stroke-linejoin="round"/><polyline points="645,591 668,590 705,590" fill="none" stroke="#878787" stroke-width="8" stroke-linecap="round" stroke-linejoin="round"/><polyline points="672,590 694,591" fill="none" stroke="#a5a5a5" stroke-width="5" stroke-linecap="round" stroke-linejoin="round"/><polyline points="718,591 740,591" fill="none" stroke="#404040" stroke-width="6" stroke-linecap="round" stroke-linejoin="round"/><polyline points="740,590.5 760,590.5 786,590.5" fill="none" stroke="#5a5a5a" stroke-width="13" stroke-linecap="round" stroke-linejoin="round"/><polyline points="746,591 782,591" fill="none" stroke="#838383" stroke-width="8" stroke-linecap="round" stroke-linejoin="round"/><polyline points="770,591 776,591" fill="none" stroke="#dddddd" stroke-width="4" stroke-linecap="round" stroke-linejoin="round"/><polyline points="786,590 815,590" fill="none" stroke="#404040" stroke-width="6" stroke-linecap="round" stroke-linejoin="round"/><polyline points="815,589 850,588 890,586" fill="none" stroke="#5a5a5a" stroke-width="9" stroke-linecap="round" stroke-linejoin="round"/><polyline points="850,587.5 890,585.5 940,583.5 975,582.5" fill="none" stroke="#787878" stroke-width="6" stroke-linecap="round" stroke-linejoin="round"/><polyline points="893,584.5 970,582.5" fill="none" stroke="#9a9a9a" stroke-width="3.5" stroke-linecap="round" stroke-linejoin="round"/><polyline points="975,582.5 1008,581.5" fill="none" stroke="#4b4b4b" stroke-width="6" stroke-linecap="round" stroke-linejoin="round"/><polyline points="1008,581.5 1040,580.5 1070,579.5" fill="none" stroke="#707070" stroke-width="6" stroke-linecap="round" stroke-linejoin="round"/><polyline points="1040,580.5 1070,579.5" fill="none" stroke="#acacac" stroke-width="4" stroke-linecap="round" stroke-linejoin="round"/><polygon points="547,627 585,627 600,631 640,627 700,626 705,635 660,641 620,646 590,651 547,652" fill="#565656"/><polygon points="547,631 582,631 592,637 577,649 547,650" fill="#747474"/><polyline points="548,623 590,623" fill="none" stroke="#838383" stroke-width="4.5" stroke-linecap="round" stroke-linejoin="round"/><polyline points="548,623 560,623" fill="none" stroke="#f0f0f0" stroke-width="3.5" stroke-linecap="round" stroke-linejoin="round"/><polyline points="572,623 582,623" fill="none" stroke="#bfbfbf" stroke-width="3" stroke-linecap="round" stroke-linejoin="round"/><polyline points="585,638 610,636 640,633 665,630" fill="none" stroke="#929292" stroke-width="7" stroke-linecap="round" stroke-linejoin="round"/><polyline points="588,638 600,637" fill="none" stroke="#dddddd" stroke-width="4" stroke-linecap="round" stroke-linejoin="round"/><polyline points="612,635 624,634" fill="none" stroke="#dddddd" stroke-width="4" stroke-linecap="round" stroke-linejoin="round"/><polyline points="633,633 645,632" fill="none" stroke="#c7c7c7" stroke-width="3" stroke-linecap="round" stroke-linejoin="round"/><polyline points="652,630 657,630" fill="none" stroke="#dddddd" stroke-width="3" stroke-linecap="round" stroke-linejoin="round"/><polyline points="670,630 700,630" fill="none" stroke="#696969" stroke-width="7" stroke-linecap="round" stroke-linejoin="round"/><polygon points="688,624 702,624 702,637 688,637" fill="#6d6d6d"/><polygon points="680,645 700,646 760,648 792,646 792,656 770,660 766,676 740,683 705,680 690,668 680,660" fill="#404040"/><polyline points="615,655 640,652.5 680,651 703,652" fill="none" stroke="#5e5e5e" stroke-width="12" stroke-linecap="round" stroke-linejoin="round"/><polyline points="640,652 680,650.5 700,651.5" fill="none" stroke="#808080" stroke-width="7.5" stroke-linecap="round" stroke-linejoin="round"/><polyline points="700,651 740,651 790,650" fill="none" stroke="#4b4b4b" stroke-width="8" stroke-linecap="round" stroke-linejoin="round"/><polyline points="692,660 705,669 730,675 760,676 775,673" fill="none" stroke="#545454" stroke-width="13" stroke-linecap="round" stroke-linejoin="round"/><polyline points="705,669 730,674 752,674" fill="none" stroke="#6d6d6d" stroke-width="7.5" stroke-linecap="round" stroke-linejoin="round"/><polygon points="788,646 800,638 830,633 870,630 898,625 901,636 870,646 840,652 800,655 788,655" fill="#5e5e5e"/><polyline points="798,647 830,645 868,641 890,635" fill="none" stroke="#838383" stroke-width="9" stroke-linecap="round" stroke-linejoin="round"/><polyline points="807,637 811,637" fill="none" stroke="#d2d2d2" stroke-width="3" stroke-linecap="round" stroke-linejoin="round"/><polyline points="821,647 825,647" fill="none" stroke="#cacaca" stroke-width="3" stroke-linecap="round" stroke-linejoin="round"/><polyline points="893,633 899,632" fill="none" stroke="#cecece" stroke-width="4" stroke-linecap="round" stroke-linejoin="round"/><polyline points="800,619 825,618 850,616 875,616" fill="none" stroke="#474747" stroke-width="6" stroke-linecap="round" stroke-linejoin="round"/><polyline points="825,618 858,616" fill="none" stroke="#747474" stroke-width="4.5" stroke-linecap="round" stroke-linejoin="round"/><polygon points="905,644 930,636 960,632 985,640 960,666 925,671 905,660" fill="#3e3e3e"/><polygon points="930,640 945,628 975,620 1005,612 1040,603 1070,597 1070,643 1030,641 1000,641 975,647 950,653 930,653" fill="#5e5e5e"/><polygon points="938,640 960,630 990,622 1020,612 1070,600 1070,631 1030,631 990,637 960,647 938,649" fill="#808080"/><polygon points="1040,606 1070,599 1070,620 1040,621" fill="#9e9e9e"/><polyline points="1003,628 1020,622 1040,616" fill="none" stroke="#cacaca" stroke-width="7" stroke-linecap="round" stroke-linejoin="round"/><polyline points="1005,627 1013,625" fill="none" stroke="#e5e5e5" stroke-width="7" stroke-linecap="round" stroke-linejoin="round"/><polyline points="1030,614 1042,611 1054,607.5" fill="none" stroke="#f9f9f9" stroke-width="7" stroke-linecap="round" stroke-linejoin="round"/><polyline points="1056,606 1068,603" fill="none" stroke="#cacaca" stroke-width="5" stroke-linecap="round" stroke-linejoin="round"/><polyline points="765,716 778,716" fill="none" stroke="#5a5a5a" stroke-width="2.5" stroke-linecap="round" stroke-linejoin="round"/><polyline points="782,716 786,716" fill="none" stroke="#4b4b4b" stroke-width="2" stroke-linecap="round" stroke-linejoin="round"/><polyline points="797,716 801,716" fill="none" stroke="#404040" stroke-width="2" stroke-linecap="round" stroke-linejoin="round"/><polyline points="755,826 757.5,826" fill="none" stroke="#565656" stroke-width="2.5" stroke-linecap="round" stroke-linejoin="round"/></g></g>
<rect x="1073" y="520" width="23.500" height="313" fill="url(#cbar)"/>
<rect x="1096" y="520" width="1.600" height="313.500" fill="#fff"/>
<rect x="1097" y="830.7" width="8.500" height="1.600" fill="#fff"/>
<text x="1109.500" y="837.7" font-size="17" fill="#ececec">0</text>
<rect x="1097" y="784.8" width="8.500" height="1.600" fill="#fff"/>
<text x="1109.500" y="791.8" font-size="17" fill="#ececec">20</text>
<rect x="1097" y="738.8" width="8.500" height="1.600" fill="#fff"/>
<text x="1109.500" y="745.8" font-size="17" fill="#ececec">40</text>
<rect x="1097" y="692.9" width="8.500" height="1.600" fill="#fff"/>
<text x="1109.500" y="699.9" font-size="17" fill="#ececec">60</text>
<rect x="1097" y="646.9" width="8.500" height="1.600" fill="#fff"/>
<text x="1109.500" y="653.9" font-size="17" fill="#ececec">80</text>
<rect x="1097" y="601.0" width="8.500" height="1.600" fill="#fff"/>
<text x="1109.500" y="608.0" font-size="17" fill="#ececec">100</text>
<rect x="1097" y="555.0" width="8.500" height="1.600" fill="#fff"/>
<text x="1109.500" y="562.0" font-size="17" fill="#ececec">120</text>
<rect x="539.300" y="520" width="1.600" height="313.500" fill="#fff"/>
<rect x="529" y="581.2" width="11" height="1.600" fill="#fff"/>
<text x="525" y="588.3" font-size="17.5" text-anchor="end" fill="#ececec">12.6(41371)</text>
<rect x="529" y="641.9" width="11" height="1.600" fill="#fff"/>
<text x="525" y="649.0" font-size="17.5" text-anchor="end" fill="#ececec">9.6(31528)</text>
<rect x="529" y="702.6" width="11" height="1.600" fill="#fff"/>
<text x="525" y="709.7" font-size="17.5" text-anchor="end" fill="#ececec">6.6(21686)</text>
<rect x="529" y="763.3" width="11" height="1.600" fill="#fff"/>
<text x="525" y="770.4" font-size="17.5" text-anchor="end" fill="#ececec">3.6(11843)</text>
<rect x="529" y="824.0" width="11" height="1.600" fill="#fff"/>
<text x="525" y="831.1" font-size="17.5" text-anchor="end" fill="#ececec">0.6(2001)</text>
<rect x="547" y="841.500" width="523" height="1.600" fill="#fff"/>
<rect x="547.2" y="842" width="1.600" height="11" fill="#fff"/>
<text x="548.0" y="873.500" font-size="17.3" text-anchor="middle" fill="#ececec">12:19:48</text>
<rect x="649.0" y="842" width="1.600" height="11" fill="#fff"/>
<text x="649.8" y="873.500" font-size="17.3" text-anchor="middle" fill="#ececec">12:21:26</text>
<rect x="750.7" y="842" width="1.600" height="11" fill="#fff"/>
<text x="751.5" y="873.500" font-size="17.3" text-anchor="middle" fill="#ececec">12:23:04</text>
<rect x="852.5" y="842" width="1.600" height="11" fill="#fff"/>
<text x="853.2" y="873.500" font-size="17.3" text-anchor="middle" fill="#ececec">12:24:42</text>
<rect x="954.2" y="842" width="1.600" height="11" fill="#fff"/>
<text x="955.0" y="873.500" font-size="17.3" text-anchor="middle" fill="#ececec">12:26:20</text>
<rect x="1056.0" y="842" width="1.600" height="11" fill="#fff"/>
<text x="1056.8" y="873.500" font-size="17.3" text-anchor="middle" fill="#ececec">12:27:59</text>
<text x="784.500" y="492.500" font-size="34" font-weight="bold" text-anchor="middle" textLength="188" lengthAdjust="spacingAndGlyphs">History Plot</text>
<text x="807.500" y="906" font-size="21" font-weight="bold" text-anchor="middle" textLength="199" lengthAdjust="spacingAndGlyphs">CPL 24Aug13 (UTC)</text>
<text transform="translate(416.500 677) rotate(-90)" font-size="20.5" font-weight="bold" text-anchor="middle" textLength="170" lengthAdjust="spacingAndGlyphs">Altitude km (feet)</text>
<text transform="translate(1151.500 675) rotate(90)" font-size="21" font-weight="bold" text-anchor="middle" textLength="136" lengthAdjust="spacingAndGlyphs">Signal Levels</text>
</svg>
</div>
<div class="abs" id="details"><svg class="abs" style="left:10px;top:10.500px" width="5" height="8" viewBox="0 0 5 8"><path d="M0.300 0.300L4.600 4L0.300 7.700z" fill="#111"/></svg><span class="abs" style="left:18px;top:7px;font-size:12.4px;color:#333">Details</span></div>
</body>
</html>
